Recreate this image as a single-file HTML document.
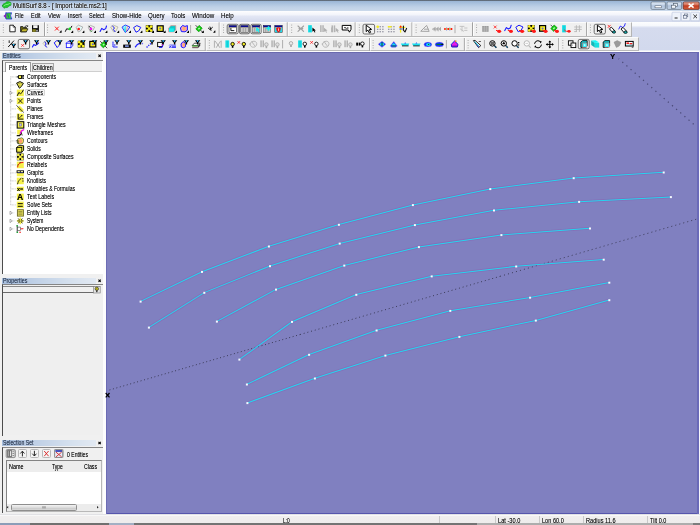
<!DOCTYPE html>
<html><head><meta charset="utf-8"><title>MultiSurf 8.8</title>
<style>
*{box-sizing:border-box;margin:0;padding:0}
html,body{width:700px;height:525px;overflow:hidden;background:#f0f0f0}
body{position:relative;font-family:"Liberation Sans",sans-serif;font-size:6px;color:#000;line-height:1}
#root{position:absolute;left:0;top:0;width:700px;height:525px;overflow:hidden;filter:blur(0.25px)}
.a{position:absolute}
.t{position:absolute;white-space:nowrap;text-shadow:0 0 0.3px rgba(0,0,0,.45)}
svg{position:absolute;left:0;top:0;overflow:visible}
#title{left:0;top:0;width:700px;height:11px;background:linear-gradient(#56626f 0,#6b7785 0.9px,#9bb6d6 1.2px,#adc4df 4px,#bfd1e7 7px,#c9d8ea 10.5px)}
#menu{left:0;top:10.5px;width:700px;height:11px;background:linear-gradient(#fdfdfe 0,#f3f5fb 3.5px,#e2e6f4 5.5px,#d9deef 9px,#d4daec 11px)}
#tbarea{left:0;top:21.5px;width:700px;height:30.5px;background:linear-gradient(#fcfdfe 0,#f6f8fc 3.6px,#e3e8f5 4.8px,#d5dbee 6px,#d2d9ed 27.6px,#e4e8f4 28.4px,#fbfbfd 29px,#fdfdfd 30.5px)}
.tb{position:absolute;background:#f0f0f0;border-top:1px solid #fbfbfb;border-right:1px solid #b4b4b4;border-bottom:1px solid #b9b9b9}
#view{left:105.5px;top:51.9px;width:594.5px;height:462.1px;background:#8080c0}
.ph{position:absolute;left:2px;width:93.5px;height:6.6px;background:linear-gradient(90deg,#a6bddc,#bfd0e6 35%,#d6e1ee 75%,#e2e9f2)}
.btn{position:absolute;background:#f4f4f4;border:1px solid #b8b8b8;border-radius:1.5px}
</style></head>
<body>
<div id="root">
<div class="a" id="title"></div>
<div class="t" style="left:13.4px;top:3px;font-size:6.3px;line-height:6.3px;height:6.3px;color:#0a0a0a;transform:scaleX(0.953);transform-origin:0 0;text-shadow:0 0 1.5px #fff,0 0 2.5px #fff,0 0 0.3px #000;">MultiSurf 8.8 - [ Import table.ms2:1]</div>
<div class="a" id="menu"></div>
<svg width="700" height="22" viewBox="0 0 700 22"><path d="M2.4 5.6 Q3 3.2 5.4 3 Q6.4 1.2 8.6 1.6 Q11.2 1.8 11.2 4 Q11.4 5.8 9 6 Q8 8.2 5.6 7.6 Q4.6 8.8 3.4 7.6 Q2 7 2.4 5.6Z" fill="#22c830" stroke="#0e8a1a" stroke-width="0.5" stroke-linecap="round" stroke-linejoin="round"/><path d="M4 5.6 Q6 4 8 4.4 Q9.6 3 10.4 3.6" fill="none" stroke="#b8ffb0" stroke-width="0.6" stroke-linecap="round" stroke-linejoin="round"/><path d="M6 13 L11.6 12.8 Q9.4 15.8 11.8 19 L6 19 Q4.4 16 6 13Z" fill="#30d028" stroke="#2828e0" stroke-width="0.8" stroke-linecap="round" stroke-linejoin="round"/><polygon points="3.4,16 6.4,13.6 6.4,18.4" fill="#8020c0"/><line x1="7.6" y1="14.4" x2="8.8" y2="17.6" stroke="#1818d0" stroke-width="0.7"/><defs><linearGradient id="gb" x1="0" y1="0" x2="0" y2="1"><stop offset="0" stop-color="#dfe9f5"/><stop offset="0.45" stop-color="#c4d4e8"/><stop offset="0.5" stop-color="#aec2dc"/><stop offset="1" stop-color="#c6d6ea"/></linearGradient><linearGradient id="gr" x1="0" y1="0" x2="0" y2="1"><stop offset="0" stop-color="#e8a898"/><stop offset="0.45" stop-color="#d4694f"/><stop offset="0.5" stop-color="#c23a20"/><stop offset="1" stop-color="#d8603c"/></linearGradient></defs><rect x="651" y="1.9" width="14.4" height="7.5" fill="url(#gb)" stroke="#5f6e80" stroke-width="0.7" rx="1.2"/><rect x="667" y="1.9" width="14.6" height="7.5" fill="url(#gb)" stroke="#5f6e80" stroke-width="0.7" rx="1.2"/><rect x="683.2" y="1.9" width="16" height="7.5" fill="url(#gr)" stroke="#5c2a22" stroke-width="0.7" rx="1.2"/><rect x="655" y="5.8" width="6.4" height="2" fill="#fff" stroke="#4a5666" stroke-width="0.5"/><rect x="673.4" y="3.6" width="4" height="3" fill="#e8eef6" stroke="#4a5666" stroke-width="0.6"/><rect x="671.6" y="5.2" width="4" height="3" fill="#f4f8fc" stroke="#4a5666" stroke-width="0.6"/><line x1="688.6" y1="3.7" x2="693.6" y2="7.7" stroke="#fff" stroke-width="1.5"/><line x1="693.6" y1="3.7" x2="688.6" y2="7.7" stroke="#fff" stroke-width="1.5"/><rect x="672" y="12.2" width="8.6" height="8.6" fill="#eef2fa" stroke="#b9c4dc" stroke-width="0.6" rx="0.8"/><rect x="681.4" y="12.2" width="8.6" height="8.6" fill="#eef2fa" stroke="#b9c4dc" stroke-width="0.6" rx="0.8"/><rect x="690.8" y="12.2" width="8.6" height="8.6" fill="#eef2fa" stroke="#b9c4dc" stroke-width="0.6" rx="0.8"/><line x1="674.6" y1="18" x2="677.6" y2="18" stroke="#222" stroke-width="1.0"/><rect x="684.6" y="14" width="3.2" height="2.8" fill="none" stroke="#55617a" stroke-width="0.6"/><rect x="683.6" y="15.4" width="3.2" height="2.8" fill="#eef2fa" stroke="#55617a" stroke-width="0.6"/><line x1="693.4" y1="14.6" x2="697" y2="18.2" stroke="#222" stroke-width="0.9"/><line x1="697" y1="14.6" x2="693.4" y2="18.2" stroke="#222" stroke-width="0.9"/></svg>
<div class="t" style="left:15.4px;top:13px;font-size:6.5px;line-height:6.5px;height:6.5px;color:#111;transform:scaleX(0.821);transform-origin:0 0;">File</div>
<div class="t" style="left:31.4px;top:13px;font-size:6.5px;line-height:6.5px;height:6.5px;color:#111;transform:scaleX(0.857);transform-origin:0 0;">Edit</div>
<div class="t" style="left:48.2px;top:13px;font-size:6.5px;line-height:6.5px;height:6.5px;color:#111;transform:scaleX(0.880);transform-origin:0 0;">View</div>
<div class="t" style="left:68.3px;top:13px;font-size:6.5px;line-height:6.5px;height:6.5px;color:#111;transform:scaleX(0.843);transform-origin:0 0;">Insert</div>
<div class="t" style="left:89.2px;top:13px;font-size:6.5px;line-height:6.5px;height:6.5px;color:#111;transform:scaleX(0.852);transform-origin:0 0;">Select</div>
<div class="t" style="left:111.5px;top:13px;font-size:6.5px;line-height:6.5px;height:6.5px;color:#111;transform:scaleX(0.934);transform-origin:0 0;">Show-Hide</div>
<div class="t" style="left:148.4px;top:13px;font-size:6.5px;line-height:6.5px;height:6.5px;color:#111;transform:scaleX(0.938);transform-origin:0 0;">Query</div>
<div class="t" style="left:171.4px;top:13px;font-size:6.5px;line-height:6.5px;height:6.5px;color:#111;transform:scaleX(0.936);transform-origin:0 0;">Tools</div>
<div class="t" style="left:192.2px;top:13px;font-size:6.5px;line-height:6.5px;height:6.5px;color:#111;transform:scaleX(0.960);transform-origin:0 0;">Window</div>
<div class="t" style="left:221.4px;top:13px;font-size:6.5px;line-height:6.5px;height:6.5px;color:#111;transform:scaleX(0.943);transform-origin:0 0;">Help</div>
<div class="a" id="tbarea"></div>
<div class="tb" style="left:0;top:21.5px;width:632px;height:15.3px"></div>
<div class="tb" style="left:0;top:36.8px;width:639.3px;height:14.4px"></div>
<svg width="700" height="52" viewBox="0 0 700 52"><rect x="2.85" y="24.6" width="0.9" height="0.9" fill="#9a9a9a"/><rect x="2.85" y="27.1" width="0.9" height="0.9" fill="#9a9a9a"/><rect x="2.85" y="29.6" width="0.9" height="0.9" fill="#9a9a9a"/><rect x="2.85" y="32.1" width="0.9" height="0.9" fill="#9a9a9a"/>
<polygon points="9.8,25.2 13.2,25.2 15.2,27.2 15.2,31.8 9.8,31.8" fill="#fff" stroke="#111" stroke-width="0.9" stroke-linejoin="round"/><polyline points="13.2,25.2 13.2,27.2 15.2,27.2" fill="none" stroke="#111" stroke-width="0.6" stroke-linejoin="round" stroke-linecap="round"/>
<polygon points="20.6,31.8 20.6,26.6 22.8,26.6 23.4,27.4 26.4,27.4 26.4,31.8" fill="#6e6a18" stroke="#111" stroke-width="0.8" stroke-linejoin="round"/>
<polygon points="20.8,31.8 22.4,28.8 28,28.8 26.4,31.8" fill="#c4b82c" stroke="#111" stroke-width="0.7" stroke-linejoin="round"/>
<path d="M25 26.4 Q26.6 24.8 27.8 26.2" fill="none" stroke="#000" stroke-width="0.7" stroke-linecap="round" stroke-linejoin="round"/><polygon points="27.2,25.4 28.4,25.8 27.6,27" fill="#000"/>
<rect x="32" y="25.2" width="6.9" height="6.6" fill="#0a0a0a"/>
<rect x="33.2" y="25.2" width="4.4" height="2.9" fill="#f4f4f4"/><rect x="32.4" y="29.2" width="3.4" height="2.6" fill="#8a8420"/><rect x="36.4" y="29.8" width="1.2" height="1.6" fill="#e8e8e8"/>
<line x1="44.6" y1="22.3" x2="44.6" y2="36" stroke="#8f8f8f" stroke-width="0.9"/><line x1="45.5" y1="22.3" x2="45.5" y2="36" stroke="#ffffff" stroke-width="0.9"/>
<rect x="47.15" y="24.6" width="0.9" height="0.9" fill="#9a9a9a"/><rect x="47.15" y="27.1" width="0.9" height="0.9" fill="#9a9a9a"/><rect x="47.15" y="29.6" width="0.9" height="0.9" fill="#9a9a9a"/><rect x="47.15" y="32.1" width="0.9" height="0.9" fill="#9a9a9a"/>
<line x1="55" y1="26.7" x2="58.8" y2="30.5" stroke="#ff1818" stroke-width="1.0"/><line x1="55" y1="30.5" x2="58.8" y2="26.7" stroke="#ff1818" stroke-width="1.0"/><polygon points="59.3,32.8 61.6,32.8 61.6,30.6 61,30.6" fill="#000"/>
<polyline points="65.4,31.4 66.6,28.8 68.6,29.2 70.4,28.6 71.8,26.2" fill="none" stroke="#111" stroke-width="1.0" stroke-linejoin="round" stroke-linecap="round"/><circle cx="69.8" cy="28.9" r="1.3" fill="#10e020"/><polygon points="70.9,33 73.2,33 73.2,30.8 72.6,30.8" fill="#000"/>
<polygon points="76,27.4 78.4,25.2 82.8,27 80.8,30.6 78.4,32" fill="#e4f8f8" stroke="#999" stroke-width="0.7" stroke-linejoin="round"/><circle cx="78.7" cy="29" r="1.3" fill="#ff1818"/><polygon points="82.1,33 84.4,33 84.4,30.8 83.8,30.8" fill="#000"/>
<polygon points="88.2,27.4 90.4,25.4 94.6,27 92.8,30.6 90.6,32" fill="#eef4ee" stroke="#999" stroke-width="0.7" stroke-linejoin="round"/><line x1="88.6" y1="25.8" x2="90.6" y2="28" stroke="#111" stroke-width="0.9"/><line x1="90" y1="29.6" x2="91.6" y2="31.6" stroke="#18a018" stroke-width="0.9"/><circle cx="91" cy="28.9" r="1.3" fill="#f018f0"/><polygon points="93.7,33 96,33 96,30.8 95.4,30.8" fill="#000"/>
<polyline points="100.1,31.4 101.7,28.4 103.7,29.8 105.7,28.6 106.5,26" fill="none" stroke="#1a1aff" stroke-width="1.1" stroke-linejoin="round" stroke-linecap="round"/><polygon points="105.1,33 107.4,33 107.4,30.8 106.8,30.8" fill="#000"/>
<polygon points="110.6,27 113.2,25 118,27 116,31 113.6,32" fill="#f4f0d0" stroke="#a8a8a8" stroke-width="0.7" stroke-linejoin="round"/><polyline points="112.6,26 114.4,28 113.4,29.6 115,31.6" fill="none" stroke="#1a1aff" stroke-width="1.0" stroke-linejoin="round" stroke-linecap="round"/><polygon points="116.9,33 119.2,33 119.2,30.8 118.6,30.8" fill="#000"/>
<polygon points="122,27.2 125.2,25 129.8,27 127.2,31 125.2,32.4" fill="#d8ffff" stroke="#1a1aff" stroke-width="0.9" stroke-linejoin="round"/><line x1="125.2" y1="25.2" x2="125.6" y2="32" stroke="#18d8e8" stroke-width="0.8"/><line x1="127.4" y1="26" x2="126.4" y2="31.6" stroke="#f06060" stroke-width="0.7"/><line x1="123.6" y1="26.4" x2="125.2" y2="32" stroke="#18d8e8" stroke-width="0.8"/><polygon points="128.7,33 131,33 131,30.8 130.4,30.8" fill="#000"/>
<polygon points="133.6,27.6 136.8,25.6 140.8,27.4 138.6,31 136,32.2" fill="#fbf8d8" stroke="#1a1aff" stroke-width="1.0" stroke-linejoin="round"/><polygon points="140.1,33 142.4,33 142.4,30.8 141.8,30.8" fill="#000"/>
<rect x="145.8" y="25.2" width="6.8" height="6.8" fill="#000"/><circle cx="147.2" cy="26.6" r="1.35" fill="#f4ec20"/><circle cx="151.2" cy="26.6" r="1.35" fill="#f4ec20"/><circle cx="147.2" cy="30.6" r="1.35" fill="#f4ec20"/><circle cx="151.2" cy="30.6" r="1.35" fill="#f4ec20"/><circle cx="149.2" cy="28.6" r="1.35" fill="#f4ec20"/><line x1="147.2" y1="26.6" x2="151.2" y2="30.6" stroke="#f4ec20" stroke-width="1.0"/><line x1="147.2" y1="30.6" x2="151.2" y2="26.6" stroke="#f4ec20" stroke-width="1.0"/><polygon points="151.7,33 154,33 154,30.8 153.4,30.8" fill="#000"/>
<rect x="156.6" y="25.2" width="7.2" height="6.8" fill="#000"/><rect x="157.8" y="26.4" width="4.8" height="4.4" fill="#f4ec20"/><circle cx="160.2" cy="28.6" r="1" fill="#6a6ad8"/><polygon points="163.3,33 165.6,33 165.6,30.8 165,30.8" fill="#000"/>
<polygon points="168.6,28.2 170.8,25.6 175.8,25.6 175.8,29.8 173.8,32 168.6,32" fill="#10c8c8" stroke="#e89090" stroke-width="0.7" stroke-linejoin="round"/><rect x="169" y="28.4" width="4.8" height="3.4" fill="#18f0f0"/><polygon points="174.7,33 177,33 177,30.8 176.4,30.8" fill="#000"/>
<polygon points="180.4,28 182.6,25.4 185,26.4 187.4,25.6 187.4,30.2 185,31.8 181.4,31.6" fill="#f8a0c0" stroke="#1a1aff" stroke-width="1.0" stroke-linejoin="round"/><rect x="182.8" y="27" width="2.6" height="3.4" fill="#ffb060"/><polygon points="186.7,33 189,33 189,30.8 188.4,30.8" fill="#000"/>
<line x1="190.6" y1="25" x2="190.6" y2="33.2" stroke="#9c9c9c" stroke-width="0.8"/>
<line x1="195.6" y1="25.2" x2="202.6" y2="32.2" stroke="#222" stroke-width="0.8"/><polygon points="195.8,29 199.2,25.4 202.2,28.2 198.8,31.8" fill="#10d010" stroke="#0a8a0a" stroke-width="0.7" stroke-linejoin="round"/><polygon points="197.8,28.8 199.2,27.4 200.2,28.4 198.8,29.8" fill="#b8f0b8"/><polygon points="201.5,33 203.8,33 203.8,30.8 203.2,30.8" fill="#000"/>
<path d="M208.4 28.2 L210 29.6 L212.4 27.4 M210 27 L211 30.4" fill="none" stroke="#111" stroke-width="1.0" stroke-linecap="round" stroke-linejoin="round"/><polygon points="213.1,32.8 215.4,32.8 215.4,30.6 214.8,30.6" fill="#000"/>
<line x1="219.2" y1="22.3" x2="219.2" y2="36" stroke="#8f8f8f" stroke-width="0.9"/><line x1="220.1" y1="22.3" x2="220.1" y2="36" stroke="#ffffff" stroke-width="0.9"/>
<rect x="223.15" y="24.6" width="0.9" height="0.9" fill="#9a9a9a"/><rect x="223.15" y="27.1" width="0.9" height="0.9" fill="#9a9a9a"/><rect x="223.15" y="29.6" width="0.9" height="0.9" fill="#9a9a9a"/><rect x="223.15" y="32.1" width="0.9" height="0.9" fill="#9a9a9a"/>
<rect x="227.2" y="24.3" width="11" height="9.5" fill="#f1f1f1" stroke="#444" stroke-width="0.75" rx="1.6"/><rect x="229" y="25.5" width="7.4" height="7" fill="#fff" stroke="#222" stroke-width="0.6"/><rect x="229" y="25.5" width="7.4" height="2.1" fill="#0a0a90"/><line x1="229" y1="27.7" x2="236.4" y2="27.7" stroke="#e8e060" stroke-width="0.5"/><polyline points="230.9,28.4 230.9,30.6 233.9,30.6" fill="none" stroke="#000" stroke-width="0.9" stroke-linejoin="round" stroke-linecap="round"/>
<rect x="239.4" y="24.3" width="10.2" height="9.5" fill="#f1f1f1" stroke="#444" stroke-width="0.75" rx="1.6"/><rect x="240.8" y="25.5" width="7.4" height="7" fill="#fff" stroke="#222" stroke-width="0.6"/><rect x="240.8" y="25.5" width="7.4" height="2.1" fill="#0a0a90"/><line x1="240.8" y1="27.7" x2="248.2" y2="27.7" stroke="#e8e060" stroke-width="0.5"/><rect x="241.1" y="28" width="6.8" height="4.2" fill="#c8c8c8"/><line x1="243.2" y1="28" x2="243.2" y2="32.2" stroke="#8a8a8a" stroke-width="0.6"/><line x1="245.6" y1="28" x2="245.6" y2="32.2" stroke="#8a8a8a" stroke-width="0.6"/>
<rect x="250.8" y="24.3" width="10.4" height="9.5" fill="#f1f1f1" stroke="#444" stroke-width="0.75" rx="1.6"/><rect x="252.3" y="25.5" width="7.4" height="7" fill="#fff" stroke="#222" stroke-width="0.6"/><rect x="252.3" y="25.5" width="7.4" height="2.1" fill="#0a0a90"/><line x1="252.3" y1="27.7" x2="259.7" y2="27.7" stroke="#e8e060" stroke-width="0.5"/><rect x="252.6" y="28" width="6.8" height="4.2" fill="#c8c8c8"/><line x1="254.7" y1="28" x2="254.7" y2="32.2" stroke="#8a8a8a" stroke-width="0.6"/><line x1="257.1" y1="28" x2="257.1" y2="32.2" stroke="#8a8a8a" stroke-width="0.6"/><polygon points="256.2,26.8 256.2,31.8 257.5,30.6 258.6,32.6 259.6,32 258.6,30.2 260,30" fill="#18f0f0"/>
<rect x="263.3" y="25.5" width="7.4" height="7" fill="#fff" stroke="#222" stroke-width="0.6"/><rect x="263.3" y="25.5" width="7.4" height="2.1" fill="#0a0a90"/><line x1="263.3" y1="27.7" x2="270.7" y2="27.7" stroke="#e8e060" stroke-width="0.5"/><rect x="263.6" y="28" width="6.8" height="4.2" fill="#c8c8c8"/><line x1="265.7" y1="28" x2="265.7" y2="32.2" stroke="#8a8a8a" stroke-width="0.6"/><line x1="268.1" y1="28" x2="268.1" y2="32.2" stroke="#8a8a8a" stroke-width="0.6"/><rect x="267.8" y="26.2" width="1.5" height="4.6" fill="#18f0f0"/><rect x="266.2" y="27.7" width="4.8" height="1.5" fill="#18f0f0"/>
<rect x="274.8" y="25.5" width="7.4" height="7" fill="#fff" stroke="#222" stroke-width="0.6"/><rect x="274.8" y="25.5" width="7.4" height="2.1" fill="#0a0a90"/><line x1="274.8" y1="27.7" x2="282.2" y2="27.7" stroke="#e8e060" stroke-width="0.5"/><rect x="275.1" y="27.8" width="6.8" height="4.4" fill="#18d8e8"/><path d="M276.1 28.2 Q278.5 26.4 280.9 28.2 Q280.7 31.2 278.5 32.4 Q276.3 31.2 276.1 28.2Z" fill="#f01010"/><rect x="278.15" y="28.4" width="0.7" height="2.4" fill="#fff"/>
<line x1="287.3" y1="22.3" x2="287.3" y2="36" stroke="#8f8f8f" stroke-width="0.9"/><line x1="288.2" y1="22.3" x2="288.2" y2="36" stroke="#ffffff" stroke-width="0.9"/>
<rect x="291.25" y="24.6" width="0.9" height="0.9" fill="#9a9a9a"/><rect x="291.25" y="27.1" width="0.9" height="0.9" fill="#9a9a9a"/><rect x="291.25" y="29.6" width="0.9" height="0.9" fill="#9a9a9a"/><rect x="291.25" y="32.1" width="0.9" height="0.9" fill="#9a9a9a"/>
<path d="M298 26 L303.6 31.4 M303.6 26 L298 31.4 M299 28.6 L302.8 28.6" fill="none" stroke="#a0a0a0" stroke-width="1.1" stroke-linecap="round" stroke-linejoin="round"/>
<rect x="308.1" y="25.2" width="3.8" height="7.2" fill="#18e0e8"/><line x1="310" y1="25.6" x2="310" y2="32" stroke="#10b8c0" stroke-width="0.6"/><polygon points="312.4,27.6 312.4,31.8 313.6,30.8 314.6,32.6 315.4,32.2 314.5,30.5 315.9,30.4" fill="#000"/>
<rect x="320.1" y="25.2" width="1.5" height="6.8" fill="#b4b4b4"/><rect x="322.3" y="25.2" width="1.5" height="6.8" fill="#b4b4b4"/><polygon points="324,27.8 324,32 325.2,31 326.2,32.8 327,32.4 326.1,30.7 327.5,30.6" fill="#b0b0b0"/>
<rect x="331.5" y="25.4" width="1.5" height="6.8" fill="#b4b4b4"/><rect x="333.7" y="25.4" width="1.5" height="6.8" fill="#b4b4b4"/><rect x="331.2" y="27.4" width="1.5" height="4.8" fill="#b4b4b4"/><polygon points="335.6,27.8 335.6,32 336.8,31 337.8,32.8 338.6,32.4 337.7,30.7 339.1,30.6" fill="#b0b0b0"/>
<path d="M342.6 25.4 H351 V29.4 L349.4 32.2 L348.4 30 H342.6 Z" fill="#fff" stroke="#000" stroke-width="1.0" stroke-linecap="round" stroke-linejoin="round"/><rect x="344.4" y="27" width="1.2" height="1.2" fill="#000"/><rect x="347.2" y="27.4" width="1.2" height="1.2" fill="#000"/><line x1="345.6" y1="28.6" x2="347.2" y2="28.2" stroke="#000" stroke-width="0.6"/>
<line x1="355.2" y1="22.3" x2="355.2" y2="36" stroke="#8f8f8f" stroke-width="0.9"/><line x1="356.1" y1="22.3" x2="356.1" y2="36" stroke="#ffffff" stroke-width="0.9"/>
<rect x="358.85" y="24.6" width="0.9" height="0.9" fill="#9a9a9a"/><rect x="358.85" y="27.1" width="0.9" height="0.9" fill="#9a9a9a"/><rect x="358.85" y="29.6" width="0.9" height="0.9" fill="#9a9a9a"/><rect x="358.85" y="32.1" width="0.9" height="0.9" fill="#9a9a9a"/>
<rect x="363" y="24.3" width="11.6" height="9.7" fill="#f1f1f1" stroke="#444" stroke-width="0.75" rx="1.6"/><polygon points="366.2,25.2 366.2,31.6 367.9,30.1 369.3,32.9 370.6,32.3 369.3,29.6 371.6,29.4" fill="#fff" stroke="#000" stroke-width="1.0" stroke-linejoin="round"/>
<rect x="376.9" y="26.2" width="1.5" height="1.1" fill="#8c8c9c"/>
<rect x="376.9" y="28.7" width="1.5" height="1.1" fill="#8c8c9c"/>
<rect x="376.9" y="31.2" width="1.5" height="1.1" fill="#8c8c9c"/>
<rect x="379.5" y="26.2" width="1.5" height="1.1" fill="#8c8c9c"/>
<rect x="379.5" y="28.7" width="1.5" height="1.1" fill="#8c8c9c"/>
<rect x="379.5" y="31.2" width="1.5" height="1.1" fill="#8c8c9c"/>
<rect x="382.1" y="26.2" width="1.5" height="1.1" fill="#8c8c9c"/>
<rect x="382.1" y="28.7" width="1.5" height="1.1" fill="#8c8c9c"/>
<rect x="382.1" y="31.2" width="1.5" height="1.1" fill="#8c8c9c"/>
<circle cx="377.7" cy="26.7" r="1.3" fill="#f4ec20"/>
<rect x="388" y="26.2" width="1.5" height="1.1" fill="#8c8c9c"/>
<rect x="388" y="28.7" width="1.5" height="1.1" fill="#8c8c9c"/>
<rect x="388" y="31.2" width="1.5" height="1.1" fill="#8c8c9c"/>
<rect x="390.6" y="26.2" width="1.5" height="1.1" fill="#8c8c9c"/>
<rect x="390.6" y="28.7" width="1.5" height="1.1" fill="#8c8c9c"/>
<rect x="390.6" y="31.2" width="1.5" height="1.1" fill="#8c8c9c"/>
<rect x="393.2" y="26.2" width="1.5" height="1.1" fill="#8c8c9c"/>
<rect x="393.2" y="28.7" width="1.5" height="1.1" fill="#8c8c9c"/>
<rect x="393.2" y="31.2" width="1.5" height="1.1" fill="#8c8c9c"/>
<rect x="387.8" y="26" width="3.8" height="1.5" fill="#f4ec20"/>
<line x1="400.6" y1="25.4" x2="400.6" y2="32.6" stroke="#f4ec20" stroke-width="1.3"/><line x1="399" y1="27.4" x2="405.4" y2="27.4" stroke="#f4ec20" stroke-width="1.2"/><circle cx="400.6" cy="26.8" r="1" fill="#ff1818"/><line x1="399.4" y1="29" x2="402.6" y2="29" stroke="#3050e0" stroke-width="1.0"/><polyline points="403.4,26 403.4,30.2 405,32 406.6,28.4" fill="none" stroke="#111" stroke-width="1.1" stroke-linejoin="round" stroke-linecap="round"/>
<line x1="412" y1="22.3" x2="412" y2="36" stroke="#8f8f8f" stroke-width="0.9"/><line x1="412.9" y1="22.3" x2="412.9" y2="36" stroke="#ffffff" stroke-width="0.9"/>
<rect x="415.65" y="24.6" width="0.9" height="0.9" fill="#9a9a9a"/><rect x="415.65" y="27.1" width="0.9" height="0.9" fill="#9a9a9a"/><rect x="415.65" y="29.6" width="0.9" height="0.9" fill="#9a9a9a"/><rect x="415.65" y="32.1" width="0.9" height="0.9" fill="#9a9a9a"/>
<path d="M421 31 L426.6 25.4 L429 31 Z M424.4 29.2 L428.2 29.2" fill="none" stroke="#a4a4a4" stroke-width="1.0" stroke-linecap="round" stroke-linejoin="round"/>
<path d="M432.4 29 L435.4 27.2 V30.8 Z M435.6 29 L438.4 27.2 V30.8 Z M441 27 L438.8 29 L441 31" fill="#a8a8a8" stroke="#a8a8a8" stroke-width="0.5" stroke-linecap="round" stroke-linejoin="round"/>
<rect x="444.2" y="28" width="1.62" height="2" fill="#ff1818"/>
<rect x="445.82" y="28" width="1.62" height="2" fill="#f4ec20"/>
<rect x="447.44" y="28" width="1.62" height="2" fill="#ff1818"/>
<rect x="449.06" y="28" width="1.62" height="2" fill="#f4ec20"/>
<rect x="450.68" y="28" width="1.62" height="2" fill="#ff1818"/>
<line x1="446.6" y1="27.2" x2="446.6" y2="30.8" stroke="#5070e0" stroke-width="0.5"/><line x1="449.8" y1="27.2" x2="449.8" y2="30.8" stroke="#5070e0" stroke-width="0.5"/>
<line x1="455" y1="25" x2="455" y2="33.2" stroke="#9c9c9c" stroke-width="0.8"/>
<path d="M460 26.4 H464 M462 26.4 V31 M464.6 28 H467 M464.6 30.4 H467 M460.4 29 L463.6 31.2" fill="none" stroke="#c0c0c0" stroke-width="0.9" stroke-linecap="round" stroke-linejoin="round"/>
<line x1="472.6" y1="22.3" x2="472.6" y2="36" stroke="#8f8f8f" stroke-width="0.9"/><line x1="473.5" y1="22.3" x2="473.5" y2="36" stroke="#ffffff" stroke-width="0.9"/>
<rect x="476.15" y="24.6" width="0.9" height="0.9" fill="#9a9a9a"/><rect x="476.15" y="27.1" width="0.9" height="0.9" fill="#9a9a9a"/><rect x="476.15" y="29.6" width="0.9" height="0.9" fill="#9a9a9a"/><rect x="476.15" y="32.1" width="0.9" height="0.9" fill="#9a9a9a"/>
<rect x="482.2" y="26" width="6.4" height="5.8" fill="#9c9c9c"/><line x1="484.4" y1="26" x2="484.4" y2="31.8" stroke="#c8c8c8" stroke-width="0.5"/><line x1="486.6" y1="26" x2="486.6" y2="31.8" stroke="#c8c8c8" stroke-width="0.5"/><line x1="482.2" y1="28" x2="488.6" y2="28" stroke="#c8c8c8" stroke-width="0.4"/><line x1="482.2" y1="30" x2="488.6" y2="30" stroke="#c8c8c8" stroke-width="0.4"/>
<line x1="493.8" y1="25.6" x2="496.6" y2="28.4" stroke="#ff1818" stroke-width="0.8"/><line x1="493.8" y1="28.4" x2="496.6" y2="25.6" stroke="#ff1818" stroke-width="0.8"/><ellipse cx="499.2" cy="31.3" rx="2" ry="1.6" fill="#ff1818"/><line x1="496" y1="30.3" x2="498.7" y2="31.3" stroke="#ff1818" stroke-width="1.0"/>
<polyline points="504.8,30.6 506.4,27.6 508.4,29 510.4,27.8 511.2,25.2" fill="none" stroke="#1a1aff" stroke-width="1.1" stroke-linejoin="round" stroke-linecap="round"/><ellipse cx="511" cy="31.3" rx="2" ry="1.6" fill="#ff1818"/><line x1="507.8" y1="30.3" x2="510.5" y2="31.3" stroke="#ff1818" stroke-width="1.0"/>
<polygon points="515.8,27.2 519,25.2 523,27 520.8,30.6 518.2,31.8" fill="#fbf8d8" stroke="#1a1aff" stroke-width="1.0" stroke-linejoin="round"/><ellipse cx="522.2" cy="31.3" rx="2" ry="1.6" fill="#ff1818"/><line x1="519" y1="30.3" x2="521.7" y2="31.3" stroke="#ff1818" stroke-width="1.0"/>
<rect x="527.8" y="25" width="6.8" height="6.8" fill="#000"/><circle cx="529.2" cy="26.4" r="1.35" fill="#f4ec20"/><circle cx="533.2" cy="26.4" r="1.35" fill="#f4ec20"/><circle cx="529.2" cy="30.4" r="1.35" fill="#f4ec20"/><circle cx="533.2" cy="30.4" r="1.35" fill="#f4ec20"/><circle cx="531.2" cy="28.4" r="1.35" fill="#f4ec20"/><line x1="529.2" y1="26.4" x2="533.2" y2="30.4" stroke="#f4ec20" stroke-width="1.0"/><line x1="529.2" y1="30.4" x2="533.2" y2="26.4" stroke="#f4ec20" stroke-width="1.0"/><ellipse cx="534" cy="31.3" rx="2" ry="1.6" fill="#ff1818"/><line x1="530.8" y1="30.3" x2="533.5" y2="31.3" stroke="#ff1818" stroke-width="1.0"/>
<rect x="539" y="25" width="7.2" height="6.8" fill="#000"/><rect x="540.2" y="26.2" width="4.8" height="4.4" fill="#f4ec20"/><circle cx="542.6" cy="28.4" r="1" fill="#6a6ad8"/><ellipse cx="545.6" cy="31.3" rx="2" ry="1.6" fill="#ff1818"/><line x1="542.4" y1="30.3" x2="545.1" y2="31.3" stroke="#ff1818" stroke-width="1.0"/>
<line x1="550.6" y1="24.8" x2="557.6" y2="31.8" stroke="#222" stroke-width="0.8"/><polygon points="550.8,28.6 554.2,25 557.2,27.8 553.8,31.4" fill="#10d010" stroke="#0a8a0a" stroke-width="0.7" stroke-linejoin="round"/><polygon points="552.8,28.4 554.2,27 555.2,28 553.8,29.4" fill="#b8f0b8"/><ellipse cx="557" cy="31.3" rx="2" ry="1.6" fill="#ff1818"/><line x1="553.8" y1="30.3" x2="556.5" y2="31.3" stroke="#ff1818" stroke-width="1.0"/>
<rect x="562.1" y="25.2" width="3.8" height="7.2" fill="#18e0e8"/><line x1="564" y1="25.6" x2="564" y2="32" stroke="#10b8c0" stroke-width="0.6"/><polyline points="564.4,30 566,31.3 568,31.3" fill="none" stroke="#ff1818" stroke-width="0.8" stroke-linejoin="round" stroke-linecap="round"/><ellipse cx="569" cy="31.3" rx="1.7" ry="1.4" fill="#ff1818"/>
<path d="M574.6 27 H581.4 M574.6 29.4 H581.4 M576.4 25.6 V31.6 M579.4 25.6 V31.6 M574.6 31.6 L576.4 31.6" fill="none" stroke="#b8b8b8" stroke-width="0.9" stroke-linecap="round" stroke-linejoin="round"/>
<line x1="586.7" y1="22.3" x2="586.7" y2="36" stroke="#8f8f8f" stroke-width="0.9"/><line x1="587.6" y1="22.3" x2="587.6" y2="36" stroke="#ffffff" stroke-width="0.9"/>
<rect x="589.95" y="24.6" width="0.9" height="0.9" fill="#9a9a9a"/><rect x="589.95" y="27.1" width="0.9" height="0.9" fill="#9a9a9a"/><rect x="589.95" y="29.6" width="0.9" height="0.9" fill="#9a9a9a"/><rect x="589.95" y="32.1" width="0.9" height="0.9" fill="#9a9a9a"/>
<rect x="594.2" y="24.3" width="11.2" height="9.7" fill="#f1f1f1" stroke="#444" stroke-width="0.75" rx="1.6"/><polygon points="597.4,25.2 597.4,31.6 599.1,30.1 600.5,32.9 601.8,32.3 600.5,29.6 602.8,29.4" fill="#fff" stroke="#000" stroke-width="1.0" stroke-linejoin="round"/>
<line x1="607.7" y1="24.9" x2="610.7" y2="27.9" stroke="#ff1818" stroke-width="0.8"/><line x1="607.7" y1="27.9" x2="610.7" y2="24.9" stroke="#ff1818" stroke-width="0.8"/><polygon points="609.4,28.8 611.4,27.2 615,31 613,33" fill="#fff" stroke="#000" stroke-width="0.9" stroke-linejoin="round"/><ellipse cx="614" cy="32" rx="1.6" ry="1.2" fill="#18b8b8" stroke="#000" stroke-width="0.7"/>
<polyline points="618.8,29 620.4,26 622.4,27.4 624.4,26.2 625.2,23.6" fill="none" stroke="#1a1aff" stroke-width="0.9" stroke-linejoin="round" stroke-linecap="round"/><polygon points="621,29 623,27.4 626.6,31.2 624.6,33.2" fill="#fff" stroke="#000" stroke-width="0.9" stroke-linejoin="round"/><ellipse cx="625.6" cy="32.2" rx="1.6" ry="1.2" fill="#18b8b8" stroke="#000" stroke-width="0.7"/>
<rect x="2.85" y="40" width="0.9" height="0.9" fill="#9a9a9a"/><rect x="2.85" y="42.5" width="0.9" height="0.9" fill="#9a9a9a"/><rect x="2.85" y="45" width="0.9" height="0.9" fill="#9a9a9a"/><rect x="2.85" y="47.5" width="0.9" height="0.9" fill="#9a9a9a"/>
<line x1="8.2" y1="47" x2="14" y2="40.6" stroke="#111" stroke-width="1.0"/><line x1="9.2" y1="40.3" x2="9.2" y2="43" stroke="#111" stroke-width="0.9"/><polygon points="10.9,43.8 16.3,43.8 14.3,46.4 14.3,48 12.9,48 12.9,46.4" fill="#000"/><polygon points="12.5,44.2 14.7,44.2 13.6,45.9" fill="#1c8cff"/><rect x="13" y="44.1" width="1.2" height="0.8" fill="#38e8f8"/>
<rect x="18.2" y="39.4" width="11.4" height="9.4" fill="#f1f1f1" stroke="#444" stroke-width="0.75" rx="1.6"/><line x1="21.3" y1="44.1" x2="23.9" y2="46.7" stroke="#ff1818" stroke-width="0.8"/><line x1="21.3" y1="46.7" x2="23.9" y2="44.1" stroke="#ff1818" stroke-width="0.8"/><polygon points="22.9,40.2 28.3,40.2 26.3,42.8 26.3,44.4 24.9,44.4 24.9,42.8" fill="#000"/><polygon points="24.5,40.6 26.7,40.6 25.6,42.3" fill="#1c8cff"/><rect x="25" y="40.5" width="1.2" height="0.8" fill="#38e8f8"/>
<polyline points="32.4,47 33.8,44.6 35.6,45.4 37.2,44.4 38.6,43" fill="none" stroke="#1a1aff" stroke-width="1.1" stroke-linejoin="round" stroke-linecap="round"/><polygon points="33.9,40.2 39.3,40.2 37.3,42.8 37.3,44.4 35.9,44.4 35.9,42.8" fill="#000"/><polygon points="35.5,40.6 37.7,40.6 36.6,42.3" fill="#1c8cff"/><rect x="36" y="40.5" width="1.2" height="0.8" fill="#38e8f8"/>
<polygon points="42.8,43.2 45,41 46,46.8" fill="#f0ecd0" stroke="#b0b0b0" stroke-width="0.6" stroke-linejoin="round"/><polyline points="45,42 46.2,44 45.2,45.4 46.6,47.2" fill="none" stroke="#1a1aff" stroke-width="1.0" stroke-linejoin="round" stroke-linecap="round"/><polygon points="45.7,40.2 51.1,40.2 49.1,42.8 49.1,44.4 47.7,44.4 47.7,42.8" fill="#000"/><polygon points="47.3,40.6 49.5,40.6 48.4,42.3" fill="#1c8cff"/><rect x="47.8" y="40.5" width="1.2" height="0.8" fill="#38e8f8"/>
<polygon points="54.2,42.8 56.8,40.6 60.4,42 59,45.4 57.2,47.6" fill="#fbf8d0" stroke="#1a1aff" stroke-width="1.0" stroke-linejoin="round"/><polygon points="57.3,40.2 62.7,40.2 60.7,42.8 60.7,44.4 59.3,44.4 59.3,42.8" fill="#000"/><polygon points="58.9,40.6 61.1,40.6 60,42.3" fill="#1c8cff"/><rect x="59.4" y="40.5" width="1.2" height="0.8" fill="#38e8f8"/>
<rect x="66.3" y="43.2" width="4.6" height="4.4" fill="#fff" stroke="#1a1aff" stroke-width="0.85"/><polyline points="66.3,43.2 68,41.4 70.6,41.4" fill="none" stroke="#1a1aff" stroke-width="0.8" stroke-linejoin="round" stroke-linecap="round"/><polyline points="70.9,47.6 72.8,45.8 72.8,43.4" fill="none" stroke="#1a1aff" stroke-width="0.8" stroke-linejoin="round" stroke-linecap="round"/><polygon points="68.9,40.2 74.3,40.2 72.3,42.8 72.3,44.4 70.9,44.4 70.9,42.8" fill="#000"/><polygon points="70.5,40.6 72.7,40.6 71.6,42.3" fill="#1c8cff"/><rect x="71" y="40.5" width="1.2" height="0.8" fill="#38e8f8"/>
<rect x="77.8" y="40.8" width="6.8" height="6.8" fill="#000"/><circle cx="79.2" cy="42.2" r="1.35" fill="#f4ec20"/><circle cx="83.2" cy="42.2" r="1.35" fill="#f4ec20"/><circle cx="79.2" cy="46.2" r="1.35" fill="#f4ec20"/><circle cx="83.2" cy="46.2" r="1.35" fill="#f4ec20"/><circle cx="81.2" cy="44.2" r="1.35" fill="#f4ec20"/><line x1="79.2" y1="42.2" x2="83.2" y2="46.2" stroke="#f4ec20" stroke-width="1.0"/><line x1="79.2" y1="46.2" x2="83.2" y2="42.2" stroke="#f4ec20" stroke-width="1.0"/><polygon points="80.5,40.2 85.9,40.2 83.9,42.8 83.9,44.4 82.5,44.4 82.5,42.8" fill="#000"/><polygon points="82.1,40.6 84.3,40.6 83.2,42.3" fill="#1c8cff"/><rect x="82.6" y="40.5" width="1.2" height="0.8" fill="#38e8f8"/>
<rect x="89.2" y="40.8" width="7.2" height="6.8" fill="#000"/><rect x="90.4" y="42" width="4.8" height="4.4" fill="#f4ec20"/><circle cx="92.8" cy="44.2" r="1" fill="#6a6ad8"/><polygon points="91.9,40.2 97.3,40.2 95.3,42.8 95.3,44.4 93.9,44.4 93.9,42.8" fill="#000"/><polygon points="93.5,40.6 95.7,40.6 94.6,42.3" fill="#1c8cff"/><rect x="94" y="40.5" width="1.2" height="0.8" fill="#38e8f8"/>
<line x1="100.2" y1="41.2" x2="107.2" y2="48.2" stroke="#222" stroke-width="0.8"/><polygon points="100.4,45 103.8,41.4 106.8,44.2 103.4,47.8" fill="#10d010" stroke="#0a8a0a" stroke-width="0.7" stroke-linejoin="round"/><polygon points="102.4,44.8 103.8,43.4 104.8,44.4 103.4,45.8" fill="#b8f0b8"/><polygon points="103.3,40.2 108.7,40.2 106.7,42.8 106.7,44.4 105.3,44.4 105.3,42.8" fill="#000"/><polygon points="104.9,40.6 107.1,40.6 106,42.3" fill="#1c8cff"/><rect x="105.4" y="40.5" width="1.2" height="0.8" fill="#38e8f8"/>
<polyline points="113,42 113,47 118,47" fill="none" stroke="#1a1aff" stroke-width="1.0" stroke-linejoin="round" stroke-linecap="round" stroke-dasharray="1.2 0.8"/><circle cx="114.8" cy="45" r="0.7" fill="#1a1aff"/><polygon points="114.3,40.2 119.7,40.2 117.7,42.8 117.7,44.4 116.3,44.4 116.3,42.8" fill="#000"/><polygon points="115.9,40.6 118.1,40.6 117,42.3" fill="#1c8cff"/><rect x="116.4" y="40.5" width="1.2" height="0.8" fill="#38e8f8"/>
<rect x="123.2" y="44.6" width="7.6" height="3.2" fill="#000"/><rect x="125" y="45.4" width="3.8" height="1.4" fill="#90a8ff"/><polygon points="126.1,40.2 131.5,40.2 129.5,42.8 129.5,44.4 128.1,44.4 128.1,42.8" fill="#000"/><polygon points="127.7,40.6 129.9,40.6 128.8,42.3" fill="#1c8cff"/><rect x="128.2" y="40.5" width="1.2" height="0.8" fill="#38e8f8"/>
<polyline points="135.4,46.8 137,44.8 139.4,43.4" fill="none" stroke="#1a1aff" stroke-width="1.3" stroke-linejoin="round" stroke-linecap="round" stroke-dasharray="1.3 1"/><circle cx="142.4" cy="43.6" r="0.8" fill="#7070ff"/><polygon points="137.7,40.2 143.1,40.2 141.1,42.8 141.1,44.4 139.7,44.4 139.7,42.8" fill="#000"/><polygon points="139.3,40.6 141.5,40.6 140.4,42.3" fill="#1c8cff"/><rect x="139.8" y="40.5" width="1.2" height="0.8" fill="#38e8f8"/>
<line x1="146.6" y1="47.4" x2="151" y2="43.4" stroke="#1a1aff" stroke-width="1.3" stroke-dasharray="1.2 1.1"/><polygon points="149.3,40.2 154.7,40.2 152.7,42.8 152.7,44.4 151.3,44.4 151.3,42.8" fill="#000"/><polygon points="150.9,40.6 153.1,40.6 152,42.3" fill="#1c8cff"/><rect x="151.4" y="40.5" width="1.2" height="0.8" fill="#38e8f8"/>
<rect x="157.6" y="42.4" width="4.8" height="4.2" fill="#fff" stroke="#111" stroke-width="1.0"/><polyline points="159.4,47.4 162,47.4 163,45" fill="none" stroke="#1a1aff" stroke-width="1.0" stroke-linejoin="round" stroke-linecap="round"/><circle cx="162.4" cy="44.8" r="0.8" fill="#f020d0"/><polygon points="160.5,40.2 165.9,40.2 163.9,42.8 163.9,44.4 162.5,44.4 162.5,42.8" fill="#000"/><polygon points="162.1,40.6 164.3,40.6 163.2,42.3" fill="#1c8cff"/><rect x="162.6" y="40.5" width="1.2" height="0.8" fill="#38e8f8"/>
<path d="M169.6 46 L171.2 47.6 M171.2 46 L169.6 47.6 M172.4 46.2 H175.6 M172.4 47.4 H175.6" fill="none" stroke="#1a1aff" stroke-width="0.9" stroke-linecap="round" stroke-linejoin="round"/><line x1="169.4" y1="45" x2="176" y2="45" stroke="#1a1aff" stroke-width="0.6"/><polygon points="171.9,40.2 177.3,40.2 175.3,42.8 175.3,44.4 173.9,44.4 173.9,42.8" fill="#000"/><polygon points="173.5,40.6 175.7,40.6 174.6,42.3" fill="#1c8cff"/><rect x="174" y="40.5" width="1.2" height="0.8" fill="#38e8f8"/>
<polygon points="181,44 183,41.6 185,42.6 185.6,46.6 183.4,47.8 181.4,47" fill="#f8a0b8" stroke="#1a1aff" stroke-width="1.0" stroke-linejoin="round"/><rect x="183.2" y="43.4" width="1.8" height="2.8" fill="#ffb060"/><polygon points="183.7,40.2 189.1,40.2 187.1,42.8 187.1,44.4 185.7,44.4 185.7,42.8" fill="#000"/><polygon points="185.3,40.6 187.5,40.6 186.4,42.3" fill="#1c8cff"/><rect x="185.8" y="40.5" width="1.2" height="0.8" fill="#38e8f8"/>
<polygon points="192.2,45.6 194.4,43.2 200.2,43.2 198,45.6" fill="#fff" stroke="#111" stroke-width="0.7" stroke-linejoin="round"/><rect x="192.2" y="45.6" width="5.8" height="1.1" fill="#20c020"/><rect x="192.2" y="46.7" width="5.8" height="0.9" fill="#f090b0"/><rect x="192.2" y="47.5" width="5.8" height="0.6" fill="#111"/><polygon points="198,45.6 200.2,43.2 200.2,45.8 198,48.1" fill="#333"/><polygon points="194.9,40.2 200.3,40.2 198.3,42.8 198.3,44.4 196.9,44.4 196.9,42.8" fill="#000"/><polygon points="196.5,40.6 198.7,40.6 197.6,42.3" fill="#1c8cff"/><rect x="197" y="40.5" width="1.2" height="0.8" fill="#38e8f8"/>
<line x1="205.3" y1="38" x2="205.3" y2="50.6" stroke="#8f8f8f" stroke-width="0.9"/><line x1="206.2" y1="38" x2="206.2" y2="50.6" stroke="#ffffff" stroke-width="0.9"/>
<rect x="208.85" y="40" width="0.9" height="0.9" fill="#9a9a9a"/><rect x="208.85" y="42.5" width="0.9" height="0.9" fill="#9a9a9a"/><rect x="208.85" y="45" width="0.9" height="0.9" fill="#9a9a9a"/><rect x="208.85" y="47.5" width="0.9" height="0.9" fill="#9a9a9a"/>
<path d="M214.4 41 V47.4 M221.2 41 V47.4 M215.4 41.4 L218 45 L220.4 41.4 M216.4 47.4 L218 44.6 L219.6 47.4" fill="none" stroke="#b0b0b0" stroke-width="1.0" stroke-linecap="round" stroke-linejoin="round"/>
<rect x="225.4" y="40.4" width="3.8" height="7.2" fill="#18e0e8"/><line x1="227.3" y1="40.8" x2="227.3" y2="47.2" stroke="#10b8c0" stroke-width="0.6"/><rect x="231.8" y="45.6" width="1.6" height="2.2" fill="#000"/><circle cx="232.6" cy="44.1" r="1.75" fill="#f4ec20" stroke="#000" stroke-width="0.85"/>
<line x1="237.5" y1="41.1" x2="240.1" y2="43.7" stroke="#ff1818" stroke-width="0.8"/><line x1="237.5" y1="43.7" x2="240.1" y2="41.1" stroke="#ff1818" stroke-width="0.8"/><rect x="243" y="45.6" width="1.6" height="2.2" fill="#000"/><circle cx="243.8" cy="44.1" r="1.75" fill="#f4ec20" stroke="#000" stroke-width="0.85"/>
<path d="M250 44 Q251 40.6 254 41.2 Q257.4 41.6 256.6 45 Q255 47.8 253.6 47.2 Q250.6 47.6 250 44 Z M252 42 L254.6 45.6" fill="#ececec" stroke="#b4b4b4" stroke-width="0.9" stroke-linecap="round" stroke-linejoin="round"/>
<rect x="260.3" y="40.4" width="1.5" height="6.8" fill="#b4b4b4"/><rect x="262.5" y="40.4" width="1.5" height="6.8" fill="#b4b4b4"/><rect x="265.6" y="46" width="1.6" height="2.2" fill="#a8a8a8"/><circle cx="266.4" cy="44.5" r="1.75" fill="#e0e0e0" stroke="#a8a8a8" stroke-width="0.85"/>
<rect x="271.3" y="40.4" width="1.5" height="6.8" fill="#b4b4b4"/><rect x="273.5" y="40.4" width="1.5" height="6.8" fill="#b4b4b4"/><rect x="276.6" y="46" width="1.6" height="2.2" fill="#a8a8a8"/><circle cx="277.4" cy="44.5" r="1.75" fill="#e0e0e0" stroke="#a8a8a8" stroke-width="0.85"/>
<line x1="282.6" y1="40" x2="282.6" y2="48.4" stroke="#9c9c9c" stroke-width="0.8"/>
<rect x="290.2" y="44.8" width="1.6" height="2.2" fill="#a4a4a4"/><circle cx="291" cy="43.3" r="1.75" fill="#e8e8e8" stroke="#a4a4a4" stroke-width="0.85"/>
<rect x="298.1" y="40.4" width="3.8" height="7.2" fill="#18e0e8"/><line x1="300" y1="40.8" x2="300" y2="47.2" stroke="#10b8c0" stroke-width="0.6"/><rect x="304" y="45.4" width="1.6" height="2.2" fill="#000"/><circle cx="304.8" cy="43.9" r="1.75" fill="#fff" stroke="#000" stroke-width="0.85"/>
<line x1="310.3" y1="41.1" x2="312.9" y2="43.7" stroke="#ff1818" stroke-width="0.8"/><line x1="310.3" y1="43.7" x2="312.9" y2="41.1" stroke="#ff1818" stroke-width="0.8"/><rect x="315.6" y="45.4" width="1.6" height="2.2" fill="#000"/><circle cx="316.4" cy="43.9" r="1.75" fill="#fff" stroke="#000" stroke-width="0.85"/>
<path d="M322.4 44 Q323.4 40.6 326.4 41.2 Q329.6 41.6 328.8 45 Q327.4 47.8 326 47.2 Q323 47.6 322.4 44 Z M324.4 42 L327 45.6" fill="#ececec" stroke="#b4b4b4" stroke-width="0.9" stroke-linecap="round" stroke-linejoin="round"/>
<rect x="333.1" y="40.4" width="1.5" height="6.8" fill="#b4b4b4"/><rect x="335.3" y="40.4" width="1.5" height="6.8" fill="#b4b4b4"/><rect x="338.6" y="46" width="1.6" height="2.2" fill="#a8a8a8"/><circle cx="339.4" cy="44.5" r="1.75" fill="#e0e0e0" stroke="#a8a8a8" stroke-width="0.85"/>
<rect x="344.3" y="40.4" width="1.5" height="6.8" fill="#b4b4b4"/><rect x="346.5" y="40.4" width="1.5" height="6.8" fill="#b4b4b4"/><rect x="349.6" y="46" width="1.6" height="2.2" fill="#a8a8a8"/><circle cx="350.4" cy="44.5" r="1.75" fill="#e0e0e0" stroke="#a8a8a8" stroke-width="0.85"/>
<rect x="356.2" y="42.6" width="2" height="3" fill="#000"/><rect x="358.8" y="42.6" width="1.6" height="3" fill="#000"/><rect x="361.6" y="45.2" width="1.6" height="2.2" fill="#000"/><circle cx="362.4" cy="43.7" r="1.75" fill="#fff" stroke="#000" stroke-width="0.85"/>
<line x1="369.6" y1="38" x2="369.6" y2="50.6" stroke="#8f8f8f" stroke-width="0.9"/><line x1="370.5" y1="38" x2="370.5" y2="50.6" stroke="#ffffff" stroke-width="0.9"/>
<rect x="372.65" y="40" width="0.9" height="0.9" fill="#9a9a9a"/><rect x="372.65" y="42.5" width="0.9" height="0.9" fill="#9a9a9a"/><rect x="372.65" y="45" width="0.9" height="0.9" fill="#9a9a9a"/><rect x="372.65" y="47.5" width="0.9" height="0.9" fill="#9a9a9a"/>
<polygon points="378,44.2 382,41 386,44.2 382,47.4" fill="#1030ff" stroke="#f0b0e0" stroke-width="0.4" stroke-linejoin="round"/><ellipse cx="382" cy="44.2" rx="1.9" ry="1.7" fill="#18e0e8"/><line x1="382" y1="42.4" x2="382" y2="46" stroke="#000" stroke-width="0.8"/>
<polygon points="390,46 393.8,41.2 397.4,46 395.6,47.4 391.8,47.4" fill="#1040ff" stroke="#f0b0e0" stroke-width="0.4" stroke-linejoin="round"/><polygon points="391.6,45 393.8,43 396,45" fill="#18e0e8"/><line x1="391.6" y1="46" x2="396" y2="46" stroke="#18a048" stroke-width="0.9"/>
<polygon points="400.8,43.6 409.4,43.6 408.2,45.8 402,45.8" fill="#18e0f0"/><line x1="402" y1="45.9" x2="408.6" y2="45.9" stroke="#000" stroke-width="0.8"/><polygon points="401,43.6 404.2,43.4 405.2,42.2 406.2,43.4 409.2,43.6" fill="#1848ff"/>
<polygon points="412,43.6 420.6,43.6 419.4,45.8 413.2,45.8" fill="#18e0f0"/><line x1="413.2" y1="45.9" x2="419.8" y2="45.9" stroke="#000" stroke-width="0.8"/><polygon points="412.2,43.6 415.4,43.4 416.4,42.2 417.4,43.4 420.4,43.6" fill="#1848ff"/>
<ellipse cx="427.9" cy="44.4" rx="4" ry="2.5" fill="#1030ff" stroke="#f0b8e8" stroke-width="0.4"/><ellipse cx="428.3" cy="44.4" rx="2.3" ry="1.5" fill="#18d8f0"/><circle cx="428.6" cy="44.4" r="0.7" fill="#0a6a30"/>
<ellipse cx="439.3" cy="44.4" rx="4.3" ry="2.5" fill="#1030ff" stroke="#f0b8e8" stroke-width="0.4"/><line x1="436.4" y1="44.4" x2="442.8" y2="44.4" stroke="#0a7a30" stroke-width="1.2"/><line x1="441.4" y1="44.4" x2="443.4" y2="44.4" stroke="#000" stroke-width="0.9"/>
<line x1="446.4" y1="40" x2="446.4" y2="48.4" stroke="#9c9c9c" stroke-width="0.8"/>
<polygon points="451.2,44.4 454.6,41 458,44.4 457.4,47 451.8,47" fill="#e818e8" stroke="#1020d0" stroke-width="1.0" stroke-linejoin="round"/><rect x="455" y="40.4" width="1.4" height="1.6" fill="#f08020"/><rect x="451.6" y="45.6" width="6" height="1.4" fill="#6010c0"/>
<line x1="464.4" y1="38" x2="464.4" y2="50.6" stroke="#8f8f8f" stroke-width="0.9"/><line x1="465.3" y1="38" x2="465.3" y2="50.6" stroke="#ffffff" stroke-width="0.9"/>
<rect x="467.65" y="40" width="0.9" height="0.9" fill="#9a9a9a"/><rect x="467.65" y="42.5" width="0.9" height="0.9" fill="#9a9a9a"/><rect x="467.65" y="45" width="0.9" height="0.9" fill="#9a9a9a"/><rect x="467.65" y="47.5" width="0.9" height="0.9" fill="#9a9a9a"/>
<polygon points="473.4,40.6 475,40.4 480.8,45.6 478.6,47.6" fill="#fff" stroke="#111" stroke-width="0.9" stroke-linejoin="round"/><line x1="474.6" y1="41.6" x2="478.8" y2="46" stroke="#18c8e8" stroke-width="1.0"/><line x1="476.6" y1="45" x2="479" y2="47.4" stroke="#2030c0" stroke-width="0.9"/><polygon points="478.2,41 480.8,41 480.8,41.8 479.6,41.8" fill="#111"/>
<line x1="484.4" y1="40" x2="484.4" y2="48.4" stroke="#9c9c9c" stroke-width="0.8"/>
<circle cx="492.4" cy="43.4" r="2.7" fill="#fdfdfd" stroke="#000" stroke-width="1.0"/><line x1="494.4" y1="45.6" x2="496.4" y2="47.8" stroke="#000" stroke-width="1.3"/><line x1="494.7" y1="46.1" x2="496.1" y2="47.7" stroke="#18a8ff" stroke-width="0.7"/><rect x="490.6" y="41.8" width="3.6" height="3.2" fill="#666"/>
<circle cx="503.8" cy="43.4" r="2.7" fill="#fdfdfd" stroke="#000" stroke-width="1.0"/><line x1="505.8" y1="45.6" x2="507.8" y2="47.8" stroke="#000" stroke-width="1.3"/><line x1="506.1" y1="46.1" x2="507.5" y2="47.7" stroke="#18a8ff" stroke-width="0.7"/><polygon points="502,44.2 503.8,41.6 505.6,44.2" fill="#000"/>
<circle cx="514.6" cy="43.4" r="2.7" fill="#fdfdfd" stroke="#000" stroke-width="1.0"/><line x1="516.6" y1="45.6" x2="518.6" y2="47.8" stroke="#000" stroke-width="1.3"/><line x1="516.9" y1="46.1" x2="518.3" y2="47.7" stroke="#18a8ff" stroke-width="0.7"/><rect x="518" y="42" width="1.3" height="1.3" fill="#000"/><rect x="518" y="44.4" width="1.3" height="1.1" fill="#000"/>
<circle cx="526.8" cy="43.4" r="2.7" fill="#fdfdfd" stroke="#b8b8b8" stroke-width="1.0"/><line x1="528.8" y1="45.6" x2="530.8" y2="47.8" stroke="#b8b8b8" stroke-width="1.1"/><line x1="525.4" y1="43.4" x2="528.2" y2="43.4" stroke="#c0c0c0" stroke-width="0.7"/>
<path d="M534.6 43.4 A3.4 3.4 0 0 1 540.6 42 M541.4 45 A3.4 3.4 0 0 1 535.4 46.6" fill="none" stroke="#000" stroke-width="1.0" stroke-linecap="round" stroke-linejoin="round"/><polygon points="539.6,41 541.8,41.4 540.6,43.4" fill="#000"/><polygon points="536.4,47.6 534.2,47.2 535.4,45.2" fill="#000"/>
<line x1="546.4" y1="44.4" x2="553.2" y2="44.4" stroke="#000" stroke-width="1.0"/><line x1="549.8" y1="41" x2="549.8" y2="47.8" stroke="#000" stroke-width="1.0"/><polygon points="549.8,40.4 548.4,42.2 551.2,42.2" fill="#000"/><polygon points="549.8,48.4 548.4,46.6 551.2,46.6" fill="#000"/><polygon points="545.8,44.4 547.6,43 547.6,45.8" fill="#000"/><polygon points="553.8,44.4 552,43 552,45.8" fill="#000"/>
<line x1="558.8" y1="38" x2="558.8" y2="50.6" stroke="#8f8f8f" stroke-width="0.9"/><line x1="559.7" y1="38" x2="559.7" y2="50.6" stroke="#ffffff" stroke-width="0.9"/>
<rect x="562.35" y="40" width="0.9" height="0.9" fill="#9a9a9a"/><rect x="562.35" y="42.5" width="0.9" height="0.9" fill="#9a9a9a"/><rect x="562.35" y="45" width="0.9" height="0.9" fill="#9a9a9a"/><rect x="562.35" y="47.5" width="0.9" height="0.9" fill="#9a9a9a"/>
<rect x="568.4" y="40.8" width="4.6" height="4.4" fill="#fff" stroke="#000" stroke-width="0.9"/><rect x="571" y="43" width="4.8" height="4.6" fill="#fff" stroke="#000" stroke-width="0.9"/><line x1="571.6" y1="44.4" x2="573" y2="45.6" stroke="#666" stroke-width="0.6"/>
<rect x="578.2" y="39.4" width="11" height="9.4" fill="#f1f1f1" stroke="#444" stroke-width="0.75" rx="1.6"/>
<polygon points="580.8,42 582.6,40.6 587.2,40.6 587.2,45.6 585.6,47.4 580.8,47.4" fill="#10c0c8" stroke="#000" stroke-width="0.8" stroke-linejoin="round"/><rect x="582.4" y="43" width="4.6" height="4.4" fill="#30f0f8" stroke="#e05050" stroke-width="0.5"/><rect x="583.8" y="44.2" width="1.6" height="1.8" fill="#b8ffff"/>
<polygon points="603.2,42 605,40.6 609.6,40.6 609.6,45.6 608,47.4 603.2,47.4" fill="#10c0c8" stroke="#000" stroke-width="0.8" stroke-linejoin="round"/><rect x="604.8" y="43" width="4.6" height="4.4" fill="#30f0f8" stroke="#e05050" stroke-width="0.5"/><rect x="606.2" y="44.2" width="1.6" height="1.8" fill="#b8ffff"/>
<polygon points="591.2,40.4 595.6,40.2 599.2,42.6 594.8,43" fill="#18f8f8"/><polygon points="591.2,40.4 594.8,43 594.8,47.6 591.2,45" fill="#10b8b8"/><rect x="594.8" y="43" width="4.4" height="4.6" fill="#18e0e0"/>
<polygon points="614,42.2 617.2,40.6 621,42.4 619.2,46 616.4,47.4" fill="#9a9a9a" stroke="#8a8a8a" stroke-width="0.5" stroke-linejoin="round"/>
<rect x="625.4" y="41.4" width="7.8" height="4.6" fill="#fff" stroke="#000" stroke-width="1.0"/><rect x="626.4" y="42.4" width="2.6" height="1.6" fill="#f02020"/><rect x="629.6" y="43" width="2.6" height="1.4" fill="#f02020"/><line x1="626.2" y1="45" x2="632.4" y2="45" stroke="#18b8c8" stroke-width="0.5"/><polygon points="631.4,47.6 633.4,47.6 633.4,46.2" fill="#000"/></svg>
<div class="a" id="view"></div>
<svg width="700" height="525" viewBox="0 0 700 525">
<line x1="106" y1="391.00" x2="300" y2="334.54" stroke="#34344e" stroke-width="0.95" stroke-dasharray="0.95 2.65"/>
<line x1="300" y1="334.54" x2="500" y2="276.33" stroke="#34344e" stroke-width="0.95" stroke-dasharray="0.95 2.90"/>
<line x1="500" y1="276.33" x2="697" y2="219.00" stroke="#34344e" stroke-width="0.95" stroke-dasharray="0.95 3.20"/>
<line x1="618.6" y1="58.7" x2="696" y2="126.3" stroke="#4a4a78" stroke-width="1.25" stroke-dasharray="1.25 4.25" stroke-dashoffset="0.6"/>
<polyline points="140.6,301.4 202,271.7 268.9,246.3 338.9,224.6 412.9,204.9 490.3,188.9 573.7,178 663.7,172.3" fill="none" stroke="rgba(150,60,160,0.28)" stroke-width="2.6"/>
<polyline points="148.9,327.4 204.3,292.6 270,266 339.7,243.4 414.9,224.9 494,210.3 579.1,201.7 670.9,196.9" fill="none" stroke="rgba(150,60,160,0.28)" stroke-width="2.6"/>
<polyline points="216.9,321.4 276,289.4 344.3,265.4 418.9,246.9 501.4,234.9 590,228.3" fill="none" stroke="rgba(150,60,160,0.28)" stroke-width="2.6"/>
<polyline points="239.4,359.4 292,321.7 356.3,294.6 431.7,276.2 516.2,266.3 603.7,259.5" fill="none" stroke="rgba(150,60,160,0.28)" stroke-width="2.6"/>
<polyline points="246.9,384.3 309.1,354.6 376.6,330.3 450.3,310.7 530.1,297.5 609.3,282.5" fill="none" stroke="rgba(150,60,160,0.28)" stroke-width="2.6"/>
<polyline points="247.4,402.9 314.9,378.3 385.4,355.4 459.4,336.7 535.8,320.4 609.3,300" fill="none" stroke="rgba(150,60,160,0.28)" stroke-width="2.6"/>
<polyline points="140.6,301.4 202,271.7 268.9,246.3 338.9,224.6 412.9,204.9 490.3,188.9 573.7,178 663.7,172.3" fill="none" stroke="#24d6f0" stroke-width="1.05"/>
<polyline points="148.9,327.4 204.3,292.6 270,266 339.7,243.4 414.9,224.9 494,210.3 579.1,201.7 670.9,196.9" fill="none" stroke="#24d6f0" stroke-width="1.05"/>
<polyline points="216.9,321.4 276,289.4 344.3,265.4 418.9,246.9 501.4,234.9 590,228.3" fill="none" stroke="#24d6f0" stroke-width="1.05"/>
<polyline points="239.4,359.4 292,321.7 356.3,294.6 431.7,276.2 516.2,266.3 603.7,259.5" fill="none" stroke="#24d6f0" stroke-width="1.05"/>
<polyline points="246.9,384.3 309.1,354.6 376.6,330.3 450.3,310.7 530.1,297.5 609.3,282.5" fill="none" stroke="#24d6f0" stroke-width="1.05"/>
<polyline points="247.4,402.9 314.9,378.3 385.4,355.4 459.4,336.7 535.8,320.4 609.3,300" fill="none" stroke="#24d6f0" stroke-width="1.05"/>
<rect x="139.6" y="300.6" width="2" height="2" fill="#f6faff"/>
<rect x="201.0" y="270.9" width="2" height="2" fill="#f6faff"/>
<rect x="267.9" y="245.5" width="2" height="2" fill="#f6faff"/>
<rect x="337.9" y="223.8" width="2" height="2" fill="#f6faff"/>
<rect x="411.9" y="204.1" width="2" height="2" fill="#f6faff"/>
<rect x="489.3" y="188.1" width="2" height="2" fill="#f6faff"/>
<rect x="572.7" y="177.2" width="2" height="2" fill="#f6faff"/>
<rect x="662.7" y="171.5" width="2" height="2" fill="#f6faff"/>
<rect x="147.9" y="326.6" width="2" height="2" fill="#f6faff"/>
<rect x="203.3" y="291.8" width="2" height="2" fill="#f6faff"/>
<rect x="269.0" y="265.2" width="2" height="2" fill="#f6faff"/>
<rect x="338.7" y="242.6" width="2" height="2" fill="#f6faff"/>
<rect x="413.9" y="224.1" width="2" height="2" fill="#f6faff"/>
<rect x="493.0" y="209.5" width="2" height="2" fill="#f6faff"/>
<rect x="578.1" y="200.9" width="2" height="2" fill="#f6faff"/>
<rect x="669.9" y="196.1" width="2" height="2" fill="#f6faff"/>
<rect x="215.9" y="320.6" width="2" height="2" fill="#f6faff"/>
<rect x="275.0" y="288.6" width="2" height="2" fill="#f6faff"/>
<rect x="343.3" y="264.6" width="2" height="2" fill="#f6faff"/>
<rect x="417.9" y="246.1" width="2" height="2" fill="#f6faff"/>
<rect x="500.4" y="234.1" width="2" height="2" fill="#f6faff"/>
<rect x="589.0" y="227.5" width="2" height="2" fill="#f6faff"/>
<rect x="238.4" y="358.6" width="2" height="2" fill="#f6faff"/>
<rect x="291.0" y="320.9" width="2" height="2" fill="#f6faff"/>
<rect x="355.3" y="293.8" width="2" height="2" fill="#f6faff"/>
<rect x="430.7" y="275.4" width="2" height="2" fill="#f6faff"/>
<rect x="515.2" y="265.5" width="2" height="2" fill="#f6faff"/>
<rect x="602.7" y="258.7" width="2" height="2" fill="#f6faff"/>
<rect x="245.9" y="383.5" width="2" height="2" fill="#f6faff"/>
<rect x="308.1" y="353.8" width="2" height="2" fill="#f6faff"/>
<rect x="375.6" y="329.5" width="2" height="2" fill="#f6faff"/>
<rect x="449.3" y="309.9" width="2" height="2" fill="#f6faff"/>
<rect x="529.1" y="296.7" width="2" height="2" fill="#f6faff"/>
<rect x="608.3" y="281.7" width="2" height="2" fill="#f6faff"/>
<rect x="246.4" y="402.1" width="2" height="2" fill="#f6faff"/>
<rect x="313.9" y="377.5" width="2" height="2" fill="#f6faff"/>
<rect x="384.4" y="354.6" width="2" height="2" fill="#f6faff"/>
<rect x="458.4" y="335.9" width="2" height="2" fill="#f6faff"/>
<rect x="534.8" y="319.6" width="2" height="2" fill="#f6faff"/>
<rect x="608.3" y="299.2" width="2" height="2" fill="#f6faff"/>
</svg>
<div class="t" style="left:610.2px;top:53px;font-size:7.2px;line-height:7.2px;height:7.2px;color:#000;font-weight:bold;transform:scaleX(1.083);transform-origin:0 0;">Y</div>
<div class="a" style="left:105.5px;top:51.6px;width:593.2px;height:1.6px;background:linear-gradient(#6c6c58 0,#6a6ac0 0.6px,#7676c6 1.6px)"></div>
<div class="a" style="left:105.5px;top:513px;width:593.2px;height:1.2px;background:#5656ac"></div>
<div class="a" style="left:105.5px;top:51.6px;width:1px;height:462.5px;background:#6c6cb4"></div>
<div class="a" style="left:697px;top:51.6px;width:1.7px;height:462.5px;background:#6a6ab8"></div>
<div class="a" style="left:698.7px;top:50.5px;width:1.3px;height:464px;background:#f6f6fa"></div>
<div class="a" style="left:0;top:51.5px;width:105.5px;height:462.7px;background:#f0f0f0"></div>
<div class="a" style="left:102.5px;top:51.5px;width:3px;height:462.7px;background:#fdfdfd"></div>
<svg width="700" height="525" viewBox="0 0 700 525"><line x1="105.7" y1="393" x2="109.5" y2="397.4" stroke="#000" stroke-width="1.25"/><line x1="109.5" y1="393" x2="105.7" y2="397.4" stroke="#000" stroke-width="1.25"/></svg>
<div class="ph" style="top:52.6px"></div>
<div class="t" style="left:3px;top:53px;font-size:6.7px;line-height:6.7px;height:6.7px;color:#2e3e5a;transform:scaleX(0.801);transform-origin:0 0;">Entities</div>
<svg width="110" height="525" viewBox="0 0 110 525"><line x1="98.5" y1="54.6" x2="100.7" y2="57" stroke="#000" stroke-width="1.1"/><line x1="100.7" y1="54.6" x2="98.5" y2="57" stroke="#000" stroke-width="1.1"/></svg>
<div class="a" style="left:2px;top:59.6px;width:100.5px;height:214px;background:#fff;border-left:1.1px solid #4c4c4c;border-top:1px solid #868686"></div>
<div class="a" style="left:3.1px;top:60.6px;width:99.4px;height:11.6px;background:#f0f0f0;border-bottom:1px solid #cfcfcf"></div>
<div class="a" style="left:5.2px;top:61.8px;width:26px;height:10.6px;background:#fff;border:0.8px solid #9a9a9a;border-bottom:none"></div>
<div class="a" style="left:31.8px;top:63px;width:22.6px;height:8.7px;background:#ececec;border:0.8px solid #a4a4a4"></div>
<div class="t" style="left:9px;top:65px;font-size:6.7px;line-height:6.7px;height:6.7px;color:#000;transform:scaleX(0.788);transform-origin:0 0;">Parents</div>
<div class="t" style="left:33.4px;top:65px;font-size:6.7px;line-height:6.7px;height:6.7px;color:#000;transform:scaleX(0.785);transform-origin:0 0;">Children</div>
<div class="a" style="left:25.3px;top:88.9px;width:19.4px;height:7.6px;background:#f6f6f6;border:0.7px solid #d4d4d4;border-radius:1px"></div>
<div class="t" style="left:27px;top:74px;font-size:6.7px;line-height:6.7px;height:6.7px;color:#000;transform:scaleX(0.766);transform-origin:0 0;">Components</div>
<div class="t" style="left:27px;top:82px;font-size:6.7px;line-height:6.7px;height:6.7px;color:#000;transform:scaleX(0.772);transform-origin:0 0;">Surfaces</div>
<div class="t" style="left:27px;top:90px;font-size:6.7px;line-height:6.7px;height:6.7px;color:#000;transform:scaleX(0.754);transform-origin:0 0;">Curves</div>
<div class="t" style="left:27px;top:98px;font-size:6.7px;line-height:6.7px;height:6.7px;color:#000;transform:scaleX(0.757);transform-origin:0 0;">Points</div>
<div class="t" style="left:27px;top:106px;font-size:6.7px;line-height:6.7px;height:6.7px;color:#000;transform:scaleX(0.757);transform-origin:0 0;">Planes</div>
<div class="t" style="left:27px;top:114px;font-size:6.7px;line-height:6.7px;height:6.7px;color:#000;transform:scaleX(0.722);transform-origin:0 0;">Frames</div>
<div class="t" style="left:27px;top:122px;font-size:6.7px;line-height:6.7px;height:6.7px;color:#000;transform:scaleX(0.783);transform-origin:0 0;">Triangle Meshes</div>
<div class="t" style="left:27px;top:130px;font-size:6.7px;line-height:6.7px;height:6.7px;color:#000;transform:scaleX(0.759);transform-origin:0 0;">Wireframes</div>
<div class="t" style="left:27px;top:138px;font-size:6.7px;line-height:6.7px;height:6.7px;color:#000;transform:scaleX(0.754);transform-origin:0 0;">Contours</div>
<div class="t" style="left:27px;top:146px;font-size:6.7px;line-height:6.7px;height:6.7px;color:#000;transform:scaleX(0.751);transform-origin:0 0;">Solids</div>
<div class="t" style="left:27px;top:154px;font-size:6.7px;line-height:6.7px;height:6.7px;color:#000;transform:scaleX(0.772);transform-origin:0 0;">Composite Surfaces</div>
<div class="t" style="left:27px;top:162px;font-size:6.7px;line-height:6.7px;height:6.7px;color:#000;transform:scaleX(0.767);transform-origin:0 0;">Relabels</div>
<div class="t" style="left:27px;top:170px;font-size:6.7px;line-height:6.7px;height:6.7px;color:#000;transform:scaleX(0.751);transform-origin:0 0;">Graphs</div>
<div class="t" style="left:27px;top:178px;font-size:6.7px;line-height:6.7px;height:6.7px;color:#000;transform:scaleX(0.754);transform-origin:0 0;">Knotlists</div>
<div class="t" style="left:27px;top:186px;font-size:6.7px;line-height:6.7px;height:6.7px;color:#000;transform:scaleX(0.758);transform-origin:0 0;">Variables &amp; Formulas</div>
<div class="t" style="left:27px;top:194px;font-size:6.7px;line-height:6.7px;height:6.7px;color:#000;transform:scaleX(0.800);transform-origin:0 0;">Text Labels</div>
<div class="t" style="left:27px;top:202px;font-size:6.7px;line-height:6.7px;height:6.7px;color:#000;transform:scaleX(0.781);transform-origin:0 0;">Solve Sets</div>
<div class="t" style="left:27px;top:210px;font-size:6.7px;line-height:6.7px;height:6.7px;color:#000;transform:scaleX(0.756);transform-origin:0 0;">Entity Lists</div>
<div class="t" style="left:27px;top:218px;font-size:6.7px;line-height:6.7px;height:6.7px;color:#000;transform:scaleX(0.739);transform-origin:0 0;">System</div>
<div class="t" style="left:27px;top:226px;font-size:6.7px;line-height:6.7px;height:6.7px;color:#000;transform:scaleX(0.795);transform-origin:0 0;">No Dependents</div>
<svg width="110" height="240" viewBox="0 0 110 240"><line x1="10.7" y1="76.6" x2="10.7" y2="204.9" stroke="#a2a2a2" stroke-width="0.7" stroke-dasharray="0.7 0.7"/><line x1="10.7" y1="76.9" x2="15.6" y2="76.9" stroke="#a2a2a2" stroke-width="0.7" stroke-dasharray="0.7 0.7"/><line x1="10.7" y1="84.9" x2="15.6" y2="84.9" stroke="#a2a2a2" stroke-width="0.7" stroke-dasharray="0.7 0.7"/><polygon points="10,91.2 12.4,92.9 10,94.6" fill="#fff" stroke="#7c7c7c" stroke-width="0.6" stroke-linejoin="round"/><line x1="13.4" y1="92.9" x2="15" y2="92.9" stroke="#c4c4c4" stroke-width="0.6" stroke-dasharray="0.7 0.7"/><polygon points="10,99.2 12.4,100.9 10,102.6" fill="#fff" stroke="#7c7c7c" stroke-width="0.6" stroke-linejoin="round"/><line x1="13.4" y1="100.9" x2="15" y2="100.9" stroke="#c4c4c4" stroke-width="0.6" stroke-dasharray="0.7 0.7"/><line x1="10.7" y1="108.9" x2="15.6" y2="108.9" stroke="#a2a2a2" stroke-width="0.7" stroke-dasharray="0.7 0.7"/><line x1="10.7" y1="116.9" x2="15.6" y2="116.9" stroke="#a2a2a2" stroke-width="0.7" stroke-dasharray="0.7 0.7"/><line x1="10.7" y1="124.9" x2="15.6" y2="124.9" stroke="#a2a2a2" stroke-width="0.7" stroke-dasharray="0.7 0.7"/><line x1="10.7" y1="132.9" x2="15.6" y2="132.9" stroke="#a2a2a2" stroke-width="0.7" stroke-dasharray="0.7 0.7"/><line x1="10.7" y1="140.9" x2="15.6" y2="140.9" stroke="#a2a2a2" stroke-width="0.7" stroke-dasharray="0.7 0.7"/><line x1="10.7" y1="148.9" x2="15.6" y2="148.9" stroke="#a2a2a2" stroke-width="0.7" stroke-dasharray="0.7 0.7"/><line x1="10.7" y1="156.9" x2="15.6" y2="156.9" stroke="#a2a2a2" stroke-width="0.7" stroke-dasharray="0.7 0.7"/><line x1="10.7" y1="164.9" x2="15.6" y2="164.9" stroke="#a2a2a2" stroke-width="0.7" stroke-dasharray="0.7 0.7"/><line x1="10.7" y1="172.9" x2="15.6" y2="172.9" stroke="#a2a2a2" stroke-width="0.7" stroke-dasharray="0.7 0.7"/><line x1="10.7" y1="180.9" x2="15.6" y2="180.9" stroke="#a2a2a2" stroke-width="0.7" stroke-dasharray="0.7 0.7"/><line x1="10.7" y1="188.9" x2="15.6" y2="188.9" stroke="#a2a2a2" stroke-width="0.7" stroke-dasharray="0.7 0.7"/><line x1="10.7" y1="196.9" x2="15.6" y2="196.9" stroke="#a2a2a2" stroke-width="0.7" stroke-dasharray="0.7 0.7"/><line x1="10.7" y1="204.9" x2="15.6" y2="204.9" stroke="#a2a2a2" stroke-width="0.7" stroke-dasharray="0.7 0.7"/><polygon points="10,211.2 12.4,212.9 10,214.6" fill="#fff" stroke="#7c7c7c" stroke-width="0.6" stroke-linejoin="round"/><line x1="13.4" y1="212.9" x2="15" y2="212.9" stroke="#c4c4c4" stroke-width="0.6" stroke-dasharray="0.7 0.7"/><polygon points="10,219.2 12.4,220.9 10,222.6" fill="#fff" stroke="#7c7c7c" stroke-width="0.6" stroke-linejoin="round"/><line x1="13.4" y1="220.9" x2="15" y2="220.9" stroke="#c4c4c4" stroke-width="0.6" stroke-dasharray="0.7 0.7"/><polygon points="10,227.2 12.4,228.9 10,230.6" fill="#fff" stroke="#7c7c7c" stroke-width="0.6" stroke-linejoin="round"/><line x1="13.4" y1="228.9" x2="15" y2="228.9" stroke="#c4c4c4" stroke-width="0.6" stroke-dasharray="0.7 0.7"/><rect x="16.6" y="76.4" width="7.4" height="1" fill="#000"/><rect x="18" y="74.9" width="4.2" height="4" fill="#000" rx="0.8"/><rect x="18.9" y="75.7" width="2.2" height="2.4" fill="#f6f04a"/><rect x="22.2" y="75" width="1.8" height="0.9" fill="#000"/><rect x="22.2" y="77.9" width="1.8" height="0.9" fill="#000"/><polygon points="16.6,83.1 20,81.6 23.4,83.3 21.4,86.5 19.4,88.2" fill="#f6f04a" stroke="#111" stroke-width="1.0" stroke-linejoin="round"/><polyline points="18.2,83.7 20.4,83.1 21.8,83.9" fill="none" stroke="#555" stroke-width="0.5" stroke-linejoin="round" stroke-linecap="round"/><line x1="20" y1="84.5" x2="19.8" y2="86.7" stroke="#555" stroke-width="0.5"/><rect x="16.8" y="89.6" width="7" height="6.6" fill="#f6f04a"/><polyline points="17.4,95.5 18.8,92.5 20.6,93.7 22.2,92.3 23.2,90.1" fill="none" stroke="#111" stroke-width="1.0" stroke-linejoin="round" stroke-linecap="round"/><rect x="16.8" y="97.6" width="7" height="6.6" fill="#f6f04a"/><line x1="18.2" y1="98.7" x2="22.6" y2="103.3" stroke="#111" stroke-width="0.9"/><line x1="22.6" y1="98.7" x2="18.2" y2="103.3" stroke="#111" stroke-width="0.9"/><polygon points="16.8,108.3 19.6,105.5 24,109.9 21.2,112.5" fill="#f6f04a"/><line x1="16.4" y1="105.3" x2="23.8" y2="112.5" stroke="#222" stroke-width="0.8"/><line x1="19" y1="108.7" x2="21.6" y2="111.1" stroke="#111" stroke-width="0.5" stroke-dasharray="0.8 0.6"/><rect x="16.8" y="113.6" width="7" height="6.6" fill="#f6f04a"/><polyline points="18.2,114.3 18.2,119.1 23,119.1" fill="none" stroke="#111" stroke-width="1.0" stroke-linejoin="round" stroke-linecap="round"/><line x1="19" y1="118.3" x2="21.8" y2="115.5" stroke="#111" stroke-width="0.8"/><polygon points="22.4,114.9 20.8,115.3 22,116.5" fill="#111"/><rect x="17.2" y="121.7" width="6.6" height="6.4" fill="#f6f04a" stroke="#000" stroke-width="1.0"/><rect x="19.3" y="123.7" width="2.4" height="2.4" fill="#b8b0f0" stroke="#555" stroke-width="0.4"/><rect x="17.2" y="129.7" width="4.6" height="4.8" fill="#f6f04a"/><polyline points="17.2,135.7 19.6,135.7 21,133.7" fill="none" stroke="#111" stroke-width="1.2" stroke-linejoin="round" stroke-linecap="round"/><polyline points="20.4,133.3 21.6,130.9 23.6,129.9" fill="none" stroke="#f018f0" stroke-width="1.5" stroke-linejoin="round" stroke-linecap="round"/><line x1="21.2" y1="132.3" x2="22.2" y2="135.5" stroke="#111" stroke-width="0.8"/><path d="M17 140.5 Q17.4 137.9 20 138.3 Q21.6 137.1 23.4 138.9 Q24 141.9 22.6 143.5 Q20 144.7 18 143.5 Q16.4 142.5 17 140.5Z" fill="#f6f04a" stroke="#333" stroke-width="0.6" stroke-linecap="round" stroke-linejoin="round"/><ellipse cx="20.6" cy="141.1" rx="1.9" ry="2.1" fill="#ff9a70"/><line x1="18" y1="143.9" x2="18" y2="140.3" stroke="#111" stroke-width="0.9"/><polygon points="16.8,147.5 18.6,145.7 23.6,145.7 23.6,150.3 21.8,152.1 16.8,152.1" fill="#f6f04a" stroke="#000" stroke-width="0.9" stroke-linejoin="round"/><rect x="16.8" y="147.5" width="5" height="4.6" fill="#f6f04a" stroke="#000" stroke-width="0.8"/><rect x="16.9" y="153.5" width="6.8" height="6.8" fill="#000"/><circle cx="18.3" cy="154.9" r="1.35" fill="#f6f04a"/><circle cx="22.3" cy="154.9" r="1.35" fill="#f6f04a"/><circle cx="18.3" cy="158.9" r="1.35" fill="#f6f04a"/><circle cx="22.3" cy="158.9" r="1.35" fill="#f6f04a"/><circle cx="20.3" cy="156.9" r="1.35" fill="#f6f04a"/><line x1="18.3" y1="154.9" x2="22.3" y2="158.9" stroke="#f6f04a" stroke-width="1.0"/><line x1="18.3" y1="158.9" x2="22.3" y2="154.9" stroke="#f6f04a" stroke-width="1.0"/><rect x="16.8" y="161.6" width="7" height="6.6" fill="#f6f04a"/><path d="M17.6 166.9 Q17.8 162.5 23 162.3" fill="none" stroke="#f01818" stroke-width="1.0" stroke-linecap="round" stroke-linejoin="round"/><rect x="19.6" y="162.1" width="0.9" height="0.9" fill="#111"/><rect x="17.3" y="164.5" width="0.9" height="0.9" fill="#1a8a1a"/><rect x="16.8" y="171.7" width="7" height="4.6" fill="#f6f04a"/><rect x="16.6" y="170.3" width="7.4" height="2.8" fill="#111"/><rect x="17.6" y="171" width="2.2" height="1.3" fill="#e8e4a0"/><rect x="20.8" y="171" width="2.2" height="1.3" fill="#e8e4a0"/><line x1="17.6" y1="172.7" x2="23" y2="172.7" stroke="#2838c8" stroke-width="0.5"/><rect x="16.8" y="177.6" width="7" height="6.6" fill="#f6f04a"/><polyline points="17.6,183.9 18.4,181.3 19.8,179.5 21,178.5" fill="none" stroke="#111" stroke-width="0.9" stroke-linejoin="round" stroke-linecap="round" stroke-dasharray="1 0.9"/><rect x="22.2" y="178.1" width="1.1" height="1.1" fill="#111"/><rect x="22.4" y="180.5" width="1.1" height="1.1" fill="#111"/><rect x="16.8" y="186.7" width="7" height="4.4" fill="#f6f04a"/><rect x="16.8" y="193.6" width="7" height="6.6" fill="#f6f04a"/><rect x="16.8" y="201.6" width="7" height="6.6" fill="#f6f04a"/><rect x="17.8" y="203.2" width="5" height="0.95" fill="#000"/><rect x="17.8" y="205.8" width="5" height="0.95" fill="#000"/><rect x="17.4" y="209.7" width="6" height="6.4" fill="#e8e060" stroke="#6c6820" stroke-width="0.9"/><line x1="18.4" y1="211.5" x2="22.4" y2="211.5" stroke="#6c6820" stroke-width="0.6"/><line x1="18.4" y1="212.9" x2="22.4" y2="212.9" stroke="#6c6820" stroke-width="0.6"/><line x1="18.4" y1="214.3" x2="22.4" y2="214.3" stroke="#6c6820" stroke-width="0.6"/><circle cx="20.3" cy="220.9" r="2.5" fill="#f6f04a"/><line x1="20.3" y1="217.5" x2="20.3" y2="224.3" stroke="#f6f04a" stroke-width="1.3"/><line x1="16.8" y1="220.9" x2="23.8" y2="220.9" stroke="#f6f04a" stroke-width="1.3"/><line x1="17.2" y1="220.9" x2="23.4" y2="220.9" stroke="#111" stroke-width="0.7"/><line x1="18.2" y1="218.4" x2="22.4" y2="223.4" stroke="#111" stroke-width="0.7"/><line x1="22.4" y1="218.4" x2="18.2" y2="223.4" stroke="#111" stroke-width="0.7"/><circle cx="20.3" cy="220.9" r="0.8" fill="#f6f04a"/><polyline points="17.2,225.9 17.2,232.1" fill="none" stroke="#222" stroke-width="0.8" stroke-linejoin="round" stroke-linecap="round"/><rect x="17.6" y="227.1" width="3" height="3.4" fill="#fff" stroke="#444" stroke-width="0.6"/><line x1="20.6" y1="228.9" x2="23.4" y2="228.7" stroke="#f01818" stroke-width="1.0"/><rect x="16.4" y="225.1" width="1.5" height="1.3" fill="#18a838"/><rect x="16.6" y="231.7" width="1.5" height="1.3" fill="#18a838"/><rect x="19.4" y="231.7" width="1.4" height="1.2" fill="#f01818"/></svg>
<div class="t" style="left:17.2px;top:187px;font-size:5.6px;line-height:5.6px;height:5.6px;color:#000;font-weight:bold;transform:scaleX(0.971);transform-origin:0 0;">x=</div>
<div class="t" style="left:17.3px;top:192px;font-size:9.4px;line-height:9.4px;height:9.4px;color:#000;font-weight:bold;transform:scaleX(0.913);transform-origin:0 0;">A</div>
<div class="ph" style="top:277.6px"></div>
<div class="t" style="left:3px;top:278px;font-size:6.7px;line-height:6.7px;height:6.7px;color:#2e3e5a;transform:scaleX(0.799);transform-origin:0 0;">Properties</div>
<svg width="110" height="525" viewBox="0 0 110 525"><line x1="98.5" y1="279.6" x2="100.7" y2="282" stroke="#000" stroke-width="1.1"/><line x1="100.7" y1="279.6" x2="98.5" y2="282" stroke="#000" stroke-width="1.1"/></svg>
<div class="a" style="left:2px;top:284.4px;width:100.5px;height:151.6px;background:#f0f0f0;border-left:1.1px solid #4c4c4c;border-top:1px solid #868686"></div>
<div class="a" style="left:3.4px;top:285.6px;width:97px;height:7.6px;border-top:0.8px solid #8a8a8a;border-bottom:0.8px solid #6a6a6a;background:#f0f0f0"></div>
<div class="a" style="left:5px;top:295px;width:95.4px;height:140px;background:#efefef"></div>
<svg width="110" height="300" viewBox="0 0 110 300"><rect x="93.4" y="286.4" width="6.8" height="6.6" fill="#e4e4e4" stroke="#7a7a7a" stroke-width="0.6"/><circle cx="96.8" cy="288.8" r="1.7" fill="#e8e020" stroke="#222" stroke-width="0.7"/><rect x="96.1" y="290.4" width="1.4" height="1.8" fill="#333"/><line x1="96.8" y1="288" x2="96.8" y2="289.8" stroke="#222" stroke-width="0.5"/></svg>
<div class="ph" style="top:439.8px"></div>
<div class="t" style="left:3px;top:440px;font-size:6.7px;line-height:6.7px;height:6.7px;color:#2e3e5a;transform:scaleX(0.775);transform-origin:0 0;">Selection Set</div>
<svg width="110" height="525" viewBox="0 0 110 525"><line x1="98.5" y1="441.8" x2="100.7" y2="444.2" stroke="#000" stroke-width="1.1"/><line x1="100.7" y1="441.8" x2="98.5" y2="444.2" stroke="#000" stroke-width="1.1"/></svg>
<div class="a" style="left:2px;top:446.6px;width:100.5px;height:66px;background:#f0f0f0;border-left:1.1px solid #4c4c4c;border-top:1px solid #868686"></div>
<div class="btn" style="left:5.6px;top:449px;width:10px;height:9.2px"></div>
<div class="btn" style="left:17.8px;top:449px;width:9.2px;height:9.2px"></div>
<div class="btn" style="left:29.8px;top:449px;width:9.2px;height:9.2px"></div>
<div class="btn" style="left:41.8px;top:449px;width:9.2px;height:9.2px"></div>
<div class="btn" style="left:53.8px;top:449px;width:9.8px;height:9.2px"></div>
<svg width="110" height="525" viewBox="0 0 110 525"><rect x="6.2" y="449.6" width="8.8" height="8" fill="#e9e9e9" stroke="#6a6a6a" stroke-width="0.7" rx="1.2"/><rect x="7.6" y="450.8" width="1.3" height="5.6" fill="#f8f8f8" stroke="#111" stroke-width="0.5"/><rect x="9.6" y="450.8" width="2.2" height="5.6" fill="#e8e8e8" stroke="#111" stroke-width="0.5"/><line x1="12.6" y1="451.2" x2="13.8" y2="451.2" stroke="#111" stroke-width="0.6"/><line x1="12.6" y1="453.4" x2="13.8" y2="453.4" stroke="#111" stroke-width="0.6"/><line x1="12.6" y1="455.6" x2="13.8" y2="455.6" stroke="#111" stroke-width="0.6"/><line x1="22.4" y1="451.4" x2="22.4" y2="456.4" stroke="#111" stroke-width="0.9"/><polyline points="20.6,453.2 22.4,451.2 24.2,453.2" fill="none" stroke="#111" stroke-width="0.9" stroke-linejoin="round" stroke-linecap="round"/><line x1="34.4" y1="450.8" x2="34.4" y2="455.8" stroke="#111" stroke-width="0.9"/><polyline points="32.6,454 34.4,456 36.2,454" fill="none" stroke="#111" stroke-width="0.9" stroke-linejoin="round" stroke-linecap="round"/><line x1="44.2" y1="451" x2="48.6" y2="456.2" stroke="#d82020" stroke-width="0.9"/><line x1="48.6" y1="451" x2="44.2" y2="456.2" stroke="#d82020" stroke-width="0.9"/><rect x="54.8" y="449.8" width="7.8" height="7.6" fill="#e8e8f4" stroke="#666" stroke-width="0.6"/><rect x="55.4" y="450.2" width="6.6" height="1.6" fill="#2030b0"/><line x1="56" y1="452.2" x2="61.6" y2="456.8" stroke="#d02828" stroke-width="0.9"/><line x1="61.6" y1="452.2" x2="56" y2="456.8" stroke="#d02828" stroke-width="0.9"/></svg>
<div class="t" style="left:67px;top:452px;font-size:6.7px;line-height:6.7px;height:6.7px;color:#000;transform:scaleX(0.762);transform-origin:0 0;">0 Entities</div>
<div class="a" style="left:5.5px;top:459.8px;width:96.2px;height:51.8px;background:#fff;border:1px solid #848484;border-right-color:#b8b8b8;border-bottom-color:#b8b8b8"></div>
<div class="a" style="left:6.5px;top:460.8px;width:94.2px;height:11px;background:#ededed"></div>
<div class="t" style="left:9px;top:464px;font-size:6.7px;line-height:6.7px;height:6.7px;color:#000;transform:scaleX(0.806);transform-origin:0 0;">Name</div>
<div class="t" style="left:52.2px;top:464px;font-size:6.7px;line-height:6.7px;height:6.7px;color:#000;transform:scaleX(0.743);transform-origin:0 0;">Type</div>
<div class="t" style="left:84px;top:464px;font-size:6.7px;line-height:6.7px;height:6.7px;color:#000;transform:scaleX(0.776);transform-origin:0 0;">Class</div>
<div class="a" style="left:6.5px;top:503.6px;width:94.2px;height:7px;background:#ececec"></div>
<div class="a" style="left:11.4px;top:503.8px;width:65.8px;height:6.8px;border:0.8px solid #8e8e8e;border-radius:1.6px;background:linear-gradient(#f4f4f4,#dcdcdc 50%,#c9c9c9 55%,#d8d8d8)"></div>
<svg width="110" height="525" viewBox="0 0 110 525"><polygon points="6.6,507.2 8.2,505.9 8.2,508.5" fill="#222"/><polygon points="98.6,507.2 97,505.9 97,508.5" fill="#222"/><line x1="42.8" y1="506.2" x2="42.8" y2="508.4" stroke="#555" stroke-width="0.5"/><line x1="44" y1="506.2" x2="44" y2="508.4" stroke="#555" stroke-width="0.5"/><line x1="45.2" y1="506.2" x2="45.2" y2="508.4" stroke="#555" stroke-width="0.5"/></svg>
<div class="a" style="left:0;top:514.2px;width:700px;height:10.8px;background:linear-gradient(#cfcfd6 0,#fbfbfb 1.2px,#f0eeee 2.4px,#eeecec 9px)"></div>
<div class="a" style="left:0px;top:523.4px;width:29.5px;height:1.6px;background:#8b9db8"></div>
<div class="a" style="left:29.5px;top:523.4px;width:79.5px;height:1.6px;background:#707070"></div>
<div class="a" style="left:109px;top:523.4px;width:25px;height:1.6px;background:#a3b0c4"></div>
<div class="a" style="left:134px;top:523.4px;width:343px;height:1.6px;background:#747474"></div>
<div class="a" style="left:477px;top:523.4px;width:216px;height:1.6px;background:#adadad"></div>
<div class="a" style="left:693px;top:523.4px;width:7px;height:1.6px;background:#7c7c7c"></div>
<div class="a" style="left:439.4px;top:516.2px;width:0.9px;height:7px;background:#c9c9c9"></div>
<div class="a" style="left:494.6px;top:516.2px;width:0.9px;height:7px;background:#c9c9c9"></div>
<div class="a" style="left:538.8px;top:516.2px;width:0.9px;height:7px;background:#c9c9c9"></div>
<div class="a" style="left:583.2px;top:516.2px;width:0.9px;height:7px;background:#c9c9c9"></div>
<div class="a" style="left:647.2px;top:516.2px;width:0.9px;height:7px;background:#c9c9c9"></div>
<div class="t" style="left:282.8px;top:518px;font-size:6.7px;line-height:6.7px;height:6.7px;color:#111;transform:scaleX(0.730);transform-origin:0 0;">L:0</div>
<div class="t" style="left:498px;top:518px;font-size:6.7px;line-height:6.7px;height:6.7px;color:#111;transform:scaleX(0.847);transform-origin:0 0;">Lat -30.0</div>
<div class="t" style="left:541.8px;top:518px;font-size:6.7px;line-height:6.7px;height:6.7px;color:#111;transform:scaleX(0.836);transform-origin:0 0;">Lon 60.0</div>
<div class="t" style="left:585.6px;top:518px;font-size:6.7px;line-height:6.7px;height:6.7px;color:#111;transform:scaleX(0.839);transform-origin:0 0;">Radius 11.6</div>
<div class="t" style="left:650px;top:518px;font-size:6.7px;line-height:6.7px;height:6.7px;color:#111;transform:scaleX(0.826);transform-origin:0 0;">Tilt 0.0</div>
</div>
</body></html>
